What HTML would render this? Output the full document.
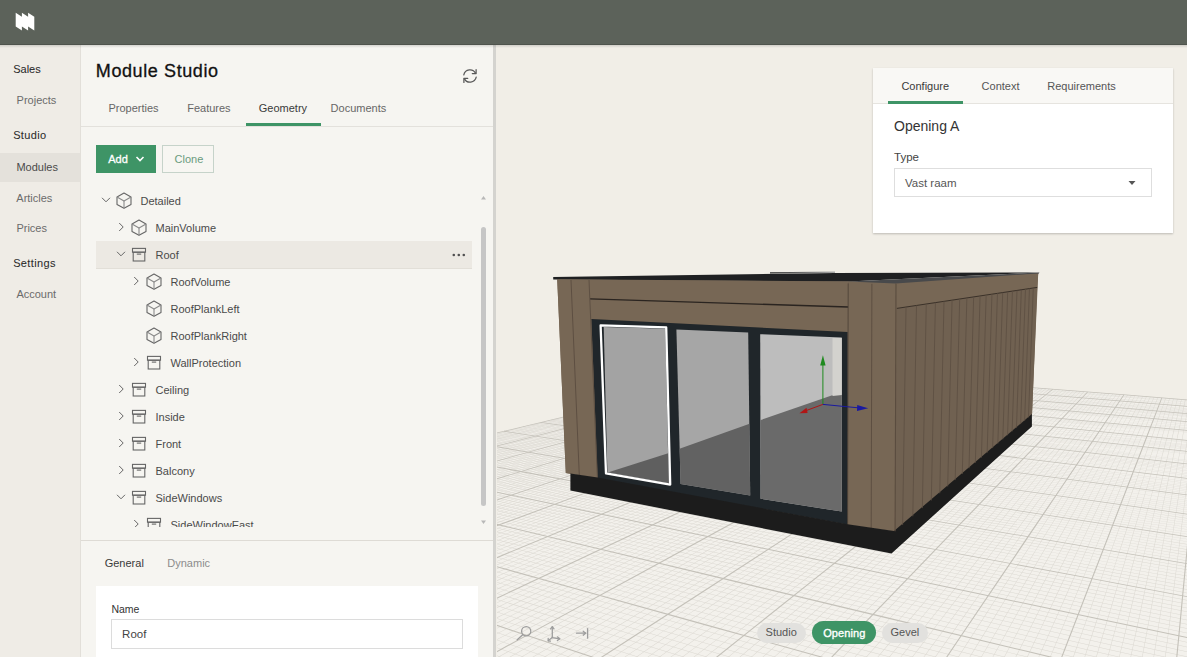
<!DOCTYPE html>
<html><head><meta charset="utf-8"><style>
html,body{margin:0;padding:0;width:1187px;height:657px;overflow:hidden;background:#f1eee7;font-family:"Liberation Sans", sans-serif}
.r{position:absolute}
.t{position:absolute;white-space:nowrap;line-height:20px;font-family:"Liberation Sans", sans-serif}
</style></head><body>
<div class="r" style="left:0px;top:0px;width:1187px;height:44px;background:#5c625a"></div><div class="r" style="left:0px;top:44px;width:1187px;height:1px;background:#4f544d"></div><svg class="r" style="left:0;top:0" width="50" height="44"><polygon fill="#fff" points="15.7,12.8 21.9,16.8 21.9,12.8 28.1,16.8 28.1,12.8 34.3,16.8 34.3,30.4 28.1,26.4 28.1,30.4 21.9,26.4 21.9,30.4 15.7,26.4"/></svg><div class="r" style="left:0px;top:45px;width:80px;height:612px;background:#efece6"></div><div class="r" style="left:80px;top:45px;width:1px;height:612px;background:#e2dfd9"></div><div class="r" style="left:0px;top:153px;width:80px;height:29px;background:#e4e1db"></div><div class="t" style="left:13.2px;top:58.99px;font-size:11px;color:#2a2a2a;font-weight:normal;letter-spacing:0px;-webkit-text-stroke:0.05px #2a2a2a">Sales</div><div class="t" style="left:16.6px;top:90.49px;font-size:11px;color:#6b6b6b;font-weight:normal;">Projects</div><div class="t" style="left:13.2px;top:125.39px;font-size:11px;color:#2a2a2a;font-weight:normal;letter-spacing:0.35px;-webkit-text-stroke:0.05px #2a2a2a">Studio</div><div class="t" style="left:16.4px;top:157.19px;font-size:11px;color:#4a4a4a;font-weight:normal;">Modules</div><div class="t" style="left:16.3px;top:187.79px;font-size:11px;color:#6b6b6b;font-weight:normal;">Articles</div><div class="t" style="left:16.4px;top:217.79px;font-size:11px;color:#6b6b6b;font-weight:normal;">Prices</div><div class="t" style="left:13.2px;top:252.79px;font-size:11px;color:#2a2a2a;font-weight:normal;letter-spacing:0.35px;-webkit-text-stroke:0.05px #2a2a2a">Settings</div><div class="t" style="left:16.4px;top:284.19px;font-size:11px;color:#6b6b6b;font-weight:normal;">Account</div><div class="r" style="left:81px;top:45px;width:412px;height:612px;background:#f6f5f1"></div><div class="r" style="left:493px;top:45px;width:3px;height:612px;background:#d4d3cf"></div><div class="t" style="left:95.8px;top:61.06px;font-size:18px;color:#111;font-weight:normal;letter-spacing:0.6px;-webkit-text-stroke:0.3px #111">Module Studio</div><svg class="r" style="left:459px;top:65px" width="22" height="22" viewBox="-11 -11 22 22"><g fill="none" stroke="#595959" stroke-width="1.25" stroke-linecap="round" stroke-linejoin="round"><path d="M-6.2,-1.2 A6.3,6.3 0 0 1 5.6,-2.6"/><polyline points="6.1,-6.4 6.1,-2.4 2.3,-2.4"/><path d="M6.2,1.2 A6.3,6.3 0 0 1 -5.6,2.6"/><polyline points="-6.1,6.4 -6.1,2.4 -2.3,2.4"/></g></svg><div class="t" style="left:108.4px;top:98.19px;font-size:11px;color:#666;font-weight:normal;">Properties</div><div class="t" style="left:187.2px;top:98.19px;font-size:11px;color:#666;font-weight:normal;">Features</div><div class="t" style="left:258.8px;top:98.19px;font-size:11px;color:#3a3a3a;font-weight:normal;">Geometry</div><div class="t" style="left:330.6px;top:98.19px;font-size:11px;color:#666;font-weight:normal;">Documents</div><div class="r" style="left:81px;top:126px;width:412px;height:1px;background:#e3e1dc"></div><div class="r" style="left:246px;top:123px;width:75px;height:3px;background:#3e9466"></div><div class="r" style="left:96px;top:145px;width:60px;height:28px;background:#3e9466"></div><div class="t" style="left:108.2px;top:149.09px;font-size:11px;color:#fff;font-weight:normal;-webkit-text-stroke:0.3px #fff">Add</div><svg class="r" style="left:134px;top:154px" width="12" height="10"><polyline points="2.5,3 6,6.5 9.5,3" fill="none" stroke="#fff" stroke-width="1.6"/></svg><div class="r" style="left:162px;top:145px;width:52px;height:28px;border:1px solid #c6d3ca;box-sizing:border-box;background:#f7f6f2"></div><div class="t" style="left:174.6px;top:149.09px;font-size:11px;color:#6a9b7e;font-weight:normal;">Clone</div><div class="r" style="left:96px;top:241px;width:376px;height:28px;background:#ece9e3;border-bottom:1px solid #e2dfd8;box-sizing:border-box"></div><svg class="r" style="left:0;top:0;overflow:hidden" width="497" height="540" viewBox="0 0 497 540"><defs><clipPath id="tc"><rect x="81" y="186" width="400" height="341"/></clipPath></defs><g clip-path="url(#tc)"><polyline points="102,197.8 106,201.8 110,197.8" fill="none" stroke="#666" stroke-width="1"/><g transform="translate(124,200.7)" fill="none" stroke="#666" stroke-width="1.1" stroke-linejoin="round"><polygon points="0,-7.6 7,-3.8 7,3.8 0,7.6 -7,3.8 -7,-3.8"/><polyline points="-7,-3.8 0,0.2 7,-3.8" stroke="#8a8a8a"/><line x1="0" y1="0.2" x2="0" y2="7.6" stroke="#8a8a8a"/></g><polyline points="119.2,223 123.2,227 119.2,231" fill="none" stroke="#666" stroke-width="1"/><g transform="translate(139,227.7)" fill="none" stroke="#666" stroke-width="1.1" stroke-linejoin="round"><polygon points="0,-7.6 7,-3.8 7,3.8 0,7.6 -7,3.8 -7,-3.8"/><polyline points="-7,-3.8 0,0.2 7,-3.8" stroke="#8a8a8a"/><line x1="0" y1="0.2" x2="0" y2="7.6" stroke="#8a8a8a"/></g><polyline points="117,251.8 121,255.8 125,251.8" fill="none" stroke="#666" stroke-width="1"/><g transform="translate(139,254.7)" fill="none" stroke="#666" stroke-width="1.1"><rect x="-6.5" y="-6.3" width="13" height="3.8"/><rect x="-5.8" y="-2.5" width="11.6" height="8.8"/><line x1="-2.2" y1="-0.6" x2="2.2" y2="-0.6"/></g><polyline points="134.2,277 138.2,281 134.2,285" fill="none" stroke="#666" stroke-width="1"/><g transform="translate(154,281.7)" fill="none" stroke="#666" stroke-width="1.1" stroke-linejoin="round"><polygon points="0,-7.6 7,-3.8 7,3.8 0,7.6 -7,3.8 -7,-3.8"/><polyline points="-7,-3.8 0,0.2 7,-3.8" stroke="#8a8a8a"/><line x1="0" y1="0.2" x2="0" y2="7.6" stroke="#8a8a8a"/></g><g transform="translate(154,308.7)" fill="none" stroke="#666" stroke-width="1.1" stroke-linejoin="round"><polygon points="0,-7.6 7,-3.8 7,3.8 0,7.6 -7,3.8 -7,-3.8"/><polyline points="-7,-3.8 0,0.2 7,-3.8" stroke="#8a8a8a"/><line x1="0" y1="0.2" x2="0" y2="7.6" stroke="#8a8a8a"/></g><g transform="translate(154,335.7)" fill="none" stroke="#666" stroke-width="1.1" stroke-linejoin="round"><polygon points="0,-7.6 7,-3.8 7,3.8 0,7.6 -7,3.8 -7,-3.8"/><polyline points="-7,-3.8 0,0.2 7,-3.8" stroke="#8a8a8a"/><line x1="0" y1="0.2" x2="0" y2="7.6" stroke="#8a8a8a"/></g><polyline points="134.2,358 138.2,362 134.2,366" fill="none" stroke="#666" stroke-width="1"/><g transform="translate(154,362.7)" fill="none" stroke="#666" stroke-width="1.1"><rect x="-6.5" y="-6.3" width="13" height="3.8"/><rect x="-5.8" y="-2.5" width="11.6" height="8.8"/><line x1="-2.2" y1="-0.6" x2="2.2" y2="-0.6"/></g><polyline points="119.2,385 123.2,389 119.2,393" fill="none" stroke="#666" stroke-width="1"/><g transform="translate(139,389.7)" fill="none" stroke="#666" stroke-width="1.1"><rect x="-6.5" y="-6.3" width="13" height="3.8"/><rect x="-5.8" y="-2.5" width="11.6" height="8.8"/><line x1="-2.2" y1="-0.6" x2="2.2" y2="-0.6"/></g><polyline points="119.2,412 123.2,416 119.2,420" fill="none" stroke="#666" stroke-width="1"/><g transform="translate(139,416.7)" fill="none" stroke="#666" stroke-width="1.1"><rect x="-6.5" y="-6.3" width="13" height="3.8"/><rect x="-5.8" y="-2.5" width="11.6" height="8.8"/><line x1="-2.2" y1="-0.6" x2="2.2" y2="-0.6"/></g><polyline points="119.2,439 123.2,443 119.2,447" fill="none" stroke="#666" stroke-width="1"/><g transform="translate(139,443.7)" fill="none" stroke="#666" stroke-width="1.1"><rect x="-6.5" y="-6.3" width="13" height="3.8"/><rect x="-5.8" y="-2.5" width="11.6" height="8.8"/><line x1="-2.2" y1="-0.6" x2="2.2" y2="-0.6"/></g><polyline points="119.2,466 123.2,470 119.2,474" fill="none" stroke="#666" stroke-width="1"/><g transform="translate(139,470.7)" fill="none" stroke="#666" stroke-width="1.1"><rect x="-6.5" y="-6.3" width="13" height="3.8"/><rect x="-5.8" y="-2.5" width="11.6" height="8.8"/><line x1="-2.2" y1="-0.6" x2="2.2" y2="-0.6"/></g><polyline points="117,494.8 121,498.8 125,494.8" fill="none" stroke="#666" stroke-width="1"/><g transform="translate(139,497.7)" fill="none" stroke="#666" stroke-width="1.1"><rect x="-6.5" y="-6.3" width="13" height="3.8"/><rect x="-5.8" y="-2.5" width="11.6" height="8.8"/><line x1="-2.2" y1="-0.6" x2="2.2" y2="-0.6"/></g><polyline points="134.2,520 138.2,524 134.2,528" fill="none" stroke="#666" stroke-width="1"/><g transform="translate(154,524.7)" fill="none" stroke="#666" stroke-width="1.1"><rect x="-6.5" y="-6.3" width="13" height="3.8"/><rect x="-5.8" y="-2.5" width="11.6" height="8.8"/><line x1="-2.2" y1="-0.6" x2="2.2" y2="-0.6"/></g></g><circle cx="453.8" cy="255" r="1.3" fill="#505050"/><circle cx="458.8" cy="255" r="1.3" fill="#505050"/><circle cx="463.8" cy="255" r="1.3" fill="#505050"/><polygon points="481,199.5 486,199.5 483.5,196" fill="#b8b8b8"/><polygon points="481,520.5 486,520.5 483.5,524" fill="#b8b8b8"/><rect x="481" y="227" width="5" height="279" rx="2.5" fill="#c6c6c6"/></svg><div class="r" style="left:81px;top:186px;width:400px;height:341px;overflow:hidden"><div class="t" style="left:59.5px;top:4.89px;font-size:11px;color:#4a4a4a">Detailed</div><div class="t" style="left:74.5px;top:31.89px;font-size:11px;color:#4a4a4a">MainVolume</div><div class="t" style="left:74.5px;top:58.89px;font-size:11px;color:#4a4a4a">Roof</div><div class="t" style="left:89.5px;top:85.89px;font-size:11px;color:#4a4a4a">RoofVolume</div><div class="t" style="left:89.5px;top:112.89px;font-size:11px;color:#4a4a4a">RoofPlankLeft</div><div class="t" style="left:89.5px;top:139.89px;font-size:11px;color:#4a4a4a">RoofPlankRight</div><div class="t" style="left:89.5px;top:166.89px;font-size:11px;color:#4a4a4a">WallProtection</div><div class="t" style="left:74.5px;top:193.89px;font-size:11px;color:#4a4a4a">Ceiling</div><div class="t" style="left:74.5px;top:220.89px;font-size:11px;color:#4a4a4a">Inside</div><div class="t" style="left:74.5px;top:247.89px;font-size:11px;color:#4a4a4a">Front</div><div class="t" style="left:74.5px;top:274.89px;font-size:11px;color:#4a4a4a">Balcony</div><div class="t" style="left:74.5px;top:301.89px;font-size:11px;color:#4a4a4a">SideWindows</div><div class="t" style="left:89.5px;top:328.89px;font-size:11px;color:#4a4a4a">SideWindowEast</div></div><div class="r" style="left:81px;top:540px;width:412px;height:1px;background:#dedbd5"></div><div class="t" style="left:104.7px;top:553.49px;font-size:11px;color:#3a3a3a;font-weight:normal;">General</div><div class="t" style="left:167.3px;top:553.49px;font-size:11px;color:#8c8c8c;font-weight:normal;">Dynamic</div><div class="r" style="left:96px;top:586px;width:382px;height:71px;background:#fff"></div><div class="t" style="left:111.4px;top:598.66px;font-size:10.5px;color:#333;font-weight:normal;">Name</div><div class="r" style="left:111px;top:619px;width:352px;height:30px;border:1px solid #dcdcdc;box-sizing:border-box;background:#fff"></div><div class="t" style="left:122.1px;top:623.92px;font-size:11.5px;color:#444;font-weight:normal;">Roof</div><svg class="r" style="left:497px;top:45px" width="690" height="612" viewBox="497 45 690 612"><polygon points="-1003.5,794.5 -973.8,787.3 -944.8,780.4 -916.6,773.6 -889.1,766.9 -862.3,760.5 -836.2,754.2 -810.7,748.0 -785.9,742.1 -761.6,736.2 -738.0,730.5 -714.9,725.0 -692.3,719.5 -670.3,714.2 -648.8,709.0 -627.7,704.0 -607.1,699.0 -587.0,694.1 -567.3,689.4 -548.1,684.8 -529.2,680.2 -510.8,675.8 -492.7,671.4 -475.0,667.2 -457.7,663.0 -440.7,658.9 -424.1,654.9 -407.8,651.0 -391.8,647.1 -376.1,643.3 -360.8,639.6 -345.7,636.0 -330.9,632.4 -316.4,628.9 -302.1,625.5 -288.2,622.2 -274.4,618.8 -261.0,615.6 -247.7,612.4 -234.7,609.3 -222.0,606.2 -209.4,603.2 -197.1,600.2 -185.0,597.3 -173.1,594.4 -161.4,591.6 -149.9,588.8 -138.5,586.1 -127.4,583.4 -116.4,580.8 -105.7,578.2 -95.1,575.6 -84.6,573.1 -74.4,570.6 -64.2,568.2 -54.3,565.8 -44.5,563.4 -34.8,561.1 -25.3,558.8 -16.0,556.6 -6.8,554.4 2.3,552.2 11.3,550.0 20.1,547.9 28.8,545.8 37.3,543.7 45.8,541.7 54.1,539.7 62.3,537.7 70.4,535.8 78.3,533.8 86.2,532.0 94.0,530.1 101.6,528.2 109.2,526.4 116.6,524.6 124.0,522.9 131.2,521.1 138.4,519.4 145.4,517.7 152.4,516.0 159.3,514.4 166.0,512.7 172.7,511.1 179.4,509.5 185.9,507.9 192.3,506.4 198.7,504.9 205.0,503.3 211.2,501.8 217.4,500.4 223.4,498.9 229.4,497.5 235.3,496.0 241.2,494.6 246.9,493.2 252.7,491.9 258.3,490.5 263.9,489.1 269.4,487.8 274.8,486.5 280.2,485.2 285.6,483.9 290.8,482.7 296.0,481.4 301.2,480.2 306.3,478.9 311.3,477.7 316.3,476.5 321.2,475.3 326.1,474.2 330.9,473.0 335.6,471.9 340.4,470.7 345.0,469.6 349.6,468.5 354.2,467.4 358.7,466.3 363.2,465.2 367.6,464.2 372.0,463.1 376.3,462.1 380.6,461.0 384.9,460.0 389.1,459.0 393.2,458.0 397.3,457.0 401.4,456.0 405.5,455.0 409.5,454.1 413.4,453.1 417.3,452.2 421.2,451.2 425.1,450.3 428.9,449.4 432.6,448.5 436.4,447.6 440.1,446.7 443.7,445.8 447.4,444.9 450.9,444.1 454.5,443.2 458.0,442.4 461.5,441.5 465.0,440.7 468.4,439.9 471.8,439.0 475.2,438.2 478.5,437.4 481.8,436.6 485.1,435.8 488.4,435.1 491.6,434.3 494.8,433.5 498.0,432.8 501.1,432.0 504.2,431.2 507.3,430.5 510.3,429.8 513.4,429.0 516.4,428.3 519.4,427.6 522.3,426.9 525.2,426.2 528.1,425.5 531.0,424.8 533.9,424.1 536.7,423.4 539.5,422.7 542.3,422.1 545.1,421.4 547.8,420.7 550.5,420.1 553.2,419.4 555.9,418.8 558.5,418.2 561.2,417.5 563.8,416.9 566.4,416.3 568.9,415.7 571.5,415.0 574.0,414.4 576.5,413.8 579.0,413.2 581.5,412.6 583.9,412.0 586.4,411.5 588.8,410.9 591.2,410.3 593.5,409.7 595.9,409.2 598.2,408.6 600.6,408.0 602.9,407.5 605.2,406.9 607.4,406.4 609.7,405.8 611.9,405.3 614.1,404.8 616.3,404.2 618.5,403.7 620.7,403.2 622.9,402.7 625.0,402.1 627.1,401.6 629.2,401.1 631.3,400.6 633.4,400.1 635.5,399.6 637.5,399.1 639.6,398.6 641.6,398.1 643.6,397.7 645.6,397.2 647.6,396.7 649.5,396.2 651.5,395.8 653.4,395.3 655.4,394.8 657.3,394.4 659.2,393.9 661.1,393.5 662.9,393.0 664.8,392.6 666.6,392.1 668.5,391.7 670.3,391.2 672.1,390.8 673.9,390.4 675.7,389.9 677.5,389.5 679.3,389.1 681.0,388.7 682.7,388.2 684.5,387.8 686.2,387.4 687.9,387.0 689.6,386.6 691.3,386.2 693.0,385.8 694.6,385.4 696.3,385.0 697.9,384.6 699.6,384.2 701.2,383.8 702.8,383.4 704.4,383.0 706.0,382.6 707.6,382.3 709.2,381.9 710.7,381.5 712.3,381.1 713.8,380.7 715.3,380.4 716.9,380.0 718.4,379.6 719.9,379.3 721.4,378.9 722.9,378.6 724.4,378.2 725.8,377.9 727.3,377.5 728.7,377.2 730.2,376.8 731.6,376.5 733.1,376.1 734.5,375.8 735.9,375.4 737.3,375.1 738.7,374.8 740.1,374.4 741.4,374.1 742.8,373.8 744.2,373.4 745.5,373.1 746.9,372.8 748.2,372.5 749.6,372.1 750.9,371.8 752.2,371.5 753.5,371.2 754.8,370.9 756.1,370.6 757.4,370.3 758.7,369.9 759.9,369.6 761.2,369.3 762.5,369.0 763.7,368.7 765.0,368.4 766.2,368.1 767.4,367.8 768.7,367.5 769.9,367.2 769.9,367.2 771.8,367.4 773.6,367.5 775.5,367.7 777.4,367.8 779.4,368.0 781.3,368.1 783.2,368.3 785.1,368.4 787.0,368.6 789.0,368.7 790.9,368.9 792.9,369.0 794.8,369.2 796.8,369.3 798.7,369.5 800.7,369.6 802.7,369.8 804.6,370.0 806.6,370.1 808.6,370.3 810.6,370.4 812.6,370.6 814.6,370.7 816.6,370.9 818.6,371.0 820.7,371.2 822.7,371.4 824.7,371.5 826.8,371.7 828.8,371.8 830.8,372.0 832.9,372.2 835.0,372.3 837.0,372.5 839.1,372.6 841.2,372.8 843.3,373.0 845.4,373.1 847.5,373.3 849.6,373.5 851.7,373.6 853.8,373.8 855.9,374.0 858.1,374.1 860.2,374.3 862.3,374.4 864.5,374.6 866.6,374.8 868.8,375.0 871.0,375.1 873.1,375.3 875.3,375.5 877.5,375.6 879.7,375.8 881.9,376.0 884.1,376.1 886.3,376.3 888.5,376.5 890.8,376.7 893.0,376.8 895.2,377.0 897.5,377.2 899.7,377.4 902.0,377.5 904.3,377.7 906.5,377.9 908.8,378.1 911.1,378.3 913.4,378.4 915.7,378.6 918.0,378.8 920.3,379.0 922.6,379.1 925.0,379.3 927.3,379.5 929.6,379.7 932.0,379.9 934.3,380.1 936.7,380.2 939.1,380.4 941.5,380.6 943.9,380.8 946.2,381.0 948.6,381.2 951.1,381.4 953.5,381.6 955.9,381.7 958.3,381.9 960.8,382.1 963.2,382.3 965.7,382.5 968.1,382.7 970.6,382.9 973.1,383.1 975.6,383.3 978.0,383.5 980.5,383.7 983.1,383.9 985.6,384.1 988.1,384.3 990.6,384.4 993.2,384.6 995.7,384.8 998.3,385.0 1000.8,385.2 1003.4,385.4 1006.0,385.6 1008.6,385.8 1011.2,386.1 1013.8,386.3 1016.4,386.5 1019.0,386.7 1021.7,386.9 1024.3,387.1 1026.9,387.3 1029.6,387.5 1032.3,387.7 1034.9,387.9 1037.6,388.1 1040.3,388.3 1043.0,388.5 1045.7,388.7 1048.5,389.0 1051.2,389.2 1053.9,389.4 1056.7,389.6 1059.4,389.8 1062.2,390.0 1065.0,390.2 1067.7,390.5 1070.5,390.7 1073.3,390.9 1076.1,391.1 1079.0,391.3 1081.8,391.6 1084.6,391.8 1087.5,392.0 1090.3,392.2 1093.2,392.4 1096.1,392.7 1099.0,392.9 1101.9,393.1 1104.8,393.3 1107.7,393.6 1110.6,393.8 1113.6,394.0 1116.5,394.3 1119.5,394.5 1122.4,394.7 1125.4,395.0 1128.4,395.2 1131.4,395.4 1134.4,395.7 1137.4,395.9 1140.4,396.1 1143.5,396.4 1146.5,396.6 1149.6,396.8 1152.7,397.1 1155.8,397.3 1158.9,397.6 1162.0,397.8 1165.1,398.0 1168.2,398.3 1171.3,398.5 1174.5,398.8 1177.6,399.0 1180.8,399.3 1184.0,399.5 1187.2,399.8 1190.4,400.0 1193.6,400.3 1196.8,400.5 1200.1,400.8 1203.3,401.0 1206.6,401.3 1209.9,401.5 1213.2,401.8 1216.5,402.1 1219.8,402.3 1223.1,402.6 1226.4,402.8 1229.8,403.1 1233.1,403.4 1236.5,403.6 1239.9,403.9 1243.3,404.1 1246.7,404.4 1250.1,404.7 1253.5,404.9 1257.0,405.2 1260.5,405.5 1263.9,405.8 1267.4,406.0 1270.9,406.3 1274.4,406.6 1277.9,406.8 1281.5,407.1 1285.0,407.4 1288.6,407.7 1292.2,408.0 1295.8,408.2 1299.4,408.5 1303.0,408.8 1306.6,409.1 1310.3,409.4 1313.9,409.6 1317.6,409.9 1321.3,410.2 1325.0,410.5 1328.7,410.8 1332.4,411.1 1336.2,411.4 1340.0,411.7 1343.7,412.0 1347.5,412.3 1351.3,412.6 1355.1,412.9 1359.0,413.2 1362.8,413.5 1366.7,413.8 1370.6,414.1 1374.5,414.4 1378.4,414.7 1382.3,415.0 1386.2,415.3 1390.2,415.6 1394.2,415.9 1398.2,416.2 1402.2,416.5 1406.2,416.8 1410.2,417.2 1414.3,417.5 1418.3,417.8 1422.4,418.1 1426.5,418.4 1430.7,418.7 1434.8,419.1 1438.9,419.4 1443.1,419.7 1447.3,420.0 1451.5,420.4 1455.7,420.7 1460.0,421.0 1464.2,421.4 1468.5,421.7 1472.8,422.0 1477.1,422.4 1481.4,422.7 1485.8,423.0 1490.1,423.4 1494.5,423.7 1498.9,424.1 1503.3,424.4 1507.8,424.8 1512.2,425.1 1516.7,425.5 1521.2,425.8 1525.7,426.2 1530.2,426.5 1534.8,426.9 1539.3,427.2 1543.9,427.6 1548.5,427.9 1553.2,428.3 1557.8,428.7 1562.5,429.0 1567.2,429.4 1571.9,429.8 1576.6,430.1 1581.4,430.5 1586.1,430.9 1590.9,431.2 1595.7,431.6 1600.6,432.0 1605.4,432.4 1610.3,432.7 1615.2,433.1 1620.1,433.5 1625.1,433.9 1630.0,434.3 1635.0,434.7 1640.0,435.1 1645.0,435.5 1650.1,435.9 1655.2,436.2 1660.3,436.6 1665.4,437.0 1670.5,437.4 1675.7,437.8 1680.9,438.3 1686.1,438.7 1691.4,439.1 1696.6,439.5 1700.0,439.5 1700.0,900.0 300.0,900.0 -1003.5,900.0" fill="#f3f1ec" /><g fill="#dcd9d2"><polygon points="-299.3,627.56 -146.2,590.44 6.9,553.31 160.0,516.18 313.1,479.04 466.1,441.89 619.2,404.74 772.3,367.57 772.2,367.28 619.1,404.39 466.0,441.51 313.0,478.64 159.9,515.78 6.8,552.93 -146.3,590.08 -299.3,627.22"/><polygon points="-299.6,630.25 -146.1,592.76 7.3,555.28 160.8,517.79 314.3,480.30 467.7,442.79 621.2,405.28 774.6,367.75 774.5,367.47 621.1,404.93 467.6,442.41 314.2,479.89 160.7,517.39 7.2,554.89 -146.2,592.40 -299.7,629.90"/><polygon points="-299.9,632.97 -146.1,595.12 7.8,557.27 161.6,519.42 315.5,481.57 469.3,443.70 623.1,405.82 777.0,367.94 776.9,367.65 623.1,405.48 469.2,443.31 315.4,481.16 161.5,519.02 7.7,556.88 -146.2,594.75 -300.0,632.62"/><polygon points="-299.2,635.46 -145.1,597.28 9.0,559.11 163.1,520.93 317.1,482.74 471.2,444.55 625.3,406.34 779.4,368.12 779.3,367.83 625.2,405.99 471.1,444.16 317.0,482.33 163.0,520.52 8.9,558.71 -145.2,596.91 -299.2,635.11"/><polygon points="-299.5,638.26 -145.0,599.71 9.4,561.16 163.9,522.61 318.4,484.05 472.8,445.48 627.3,406.90 781.7,368.31 781.7,368.02 627.2,406.55 472.7,445.09 318.3,483.64 163.8,522.20 9.3,560.76 -145.1,599.33 -299.6,637.90"/><polygon points="-299.8,641.10 -145.0,602.17 9.9,563.24 164.7,524.31 319.6,485.37 474.4,446.42 629.3,407.47 784.1,368.50 784.1,368.21 629.2,407.11 474.3,446.03 319.5,484.96 164.6,523.90 9.8,562.84 -145.1,601.79 -299.9,640.74"/><polygon points="-299.1,643.70 -144.0,604.43 11.1,565.16 166.2,525.88 321.3,486.60 476.4,447.30 631.5,408.00 786.5,368.68 786.5,368.39 631.4,407.64 476.3,446.91 321.2,486.18 166.1,525.46 11.0,564.75 -144.1,604.05 -299.2,643.34"/><polygon points="-299.4,646.62 -143.9,606.96 11.6,567.30 167.0,527.63 322.5,487.96 478.0,448.27 633.5,408.58 788.9,368.87 788.9,368.58 633.4,408.22 477.9,447.87 322.4,487.54 166.9,527.21 11.5,566.89 -144.0,606.57 -299.5,646.26"/><polygon points="-299.8,649.59 -143.9,609.53 12.0,569.47 167.9,529.41 323.8,489.34 479.6,449.26 635.5,409.16 791.4,369.06 791.3,368.77 635.4,408.81 479.5,448.85 323.6,488.91 167.8,528.98 11.9,569.06 -144.0,609.14 -299.8,649.22"/><polygon points="-299.3,655.37 -142.8,614.54 13.7,573.71 170.2,532.87 326.7,492.03 483.2,451.18 639.7,410.31 796.2,369.44 796.1,369.15 639.6,409.95 483.1,450.77 326.6,491.60 170.1,532.44 13.6,573.29 -142.9,614.14 -299.4,654.99"/><polygon points="-299.7,658.47 -142.8,617.22 14.1,575.98 171.1,534.73 328.0,493.47 484.9,452.20 641.8,410.92 798.7,369.63 798.6,369.33 641.7,410.56 484.8,451.79 327.8,493.04 170.9,534.29 14.0,575.56 -142.9,616.82 -299.8,658.09"/><polygon points="-298.9,661.32 -141.7,619.69 15.4,578.07 172.6,536.44 329.7,494.80 486.8,453.15 644.0,411.49 801.1,369.82 801.0,369.53 643.9,411.13 486.7,452.74 329.6,494.36 172.4,536.00 15.3,577.64 -141.8,619.29 -299.0,660.93"/><polygon points="-299.2,664.52 -141.7,622.46 15.9,580.41 173.4,538.35 331.0,496.28 488.5,454.20 646.0,412.11 803.6,370.01 803.5,369.72 645.9,411.75 488.4,453.79 330.8,495.84 173.3,537.90 15.8,579.98 -141.8,622.05 -299.3,664.12"/><polygon points="-299.6,667.77 -141.6,625.27 16.3,582.78 174.3,540.29 332.2,497.78 490.2,455.27 648.1,412.74 806.0,370.21 806.0,369.91 648.0,412.37 490.0,454.85 332.1,497.34 174.1,539.84 16.2,582.35 -141.7,624.86 -299.7,667.37"/><polygon points="-298.8,670.75 -140.6,627.86 17.6,584.97 175.8,542.07 334.0,499.17 492.2,456.26 650.3,413.34 808.5,370.40 808.4,370.10 650.2,412.96 492.0,455.84 333.9,498.73 175.7,541.62 17.5,584.53 -140.7,627.44 -298.9,670.35"/><polygon points="-299.1,674.10 -140.5,630.76 18.1,587.42 176.7,544.07 335.2,500.72 493.8,457.36 652.4,413.98 811.0,370.60 810.9,370.29 652.3,413.61 493.7,456.93 335.1,500.27 176.5,543.62 17.9,586.98 -140.6,630.33 -299.2,673.69"/><polygon points="-299.5,677.51 -140.5,633.71 18.5,589.91 177.5,546.10 336.5,502.29 495.5,458.47 654.5,414.64 813.5,370.79 813.4,370.49 654.4,414.26 495.4,458.04 336.4,501.84 177.4,545.65 18.4,589.46 -140.6,633.28 -299.6,677.09"/><polygon points="-299.9,680.97 -140.4,636.70 19.0,592.44 178.4,548.17 337.8,503.89 497.2,459.60 656.6,415.30 816.0,370.99 815.9,370.68 656.5,414.92 497.1,459.17 337.7,503.43 178.2,547.70 18.8,591.99 -140.6,636.27 -300.0,680.55"/><polygon points="-299.4,687.72 -139.3,642.55 20.7,597.37 180.8,552.19 340.9,507.01 500.9,461.81 661.0,416.60 821.0,371.38 820.9,371.07 660.9,416.22 500.8,461.38 340.7,506.54 180.7,551.72 20.6,596.91 -139.5,642.10 -299.5,687.29"/><polygon points="-299.8,691.36 -139.3,645.69 21.2,600.02 181.7,554.36 342.1,508.68 502.6,462.99 663.1,417.29 823.6,371.58 823.5,371.27 663.0,416.91 502.5,462.55 342.0,508.21 181.5,553.88 21.1,599.56 -139.4,645.24 -299.9,690.92"/><polygon points="-298.9,694.70 -138.2,648.58 22.5,602.47 183.2,556.35 344.0,510.22 504.7,464.09 665.4,417.94 826.1,371.77 826.0,371.47 665.3,417.55 504.5,463.65 343.8,509.75 183.1,555.87 22.4,602.00 -138.3,648.13 -299.0,694.26"/><polygon points="-299.3,698.45 -138.2,651.83 23.0,605.20 184.1,558.58 345.3,511.95 506.4,465.30 667.5,418.64 828.6,371.97 828.5,371.67 667.4,418.26 506.3,464.86 345.1,511.47 184.0,558.10 22.8,604.73 -138.3,651.37 -299.4,698.00"/><polygon points="-299.7,702.27 -138.1,655.13 23.4,607.99 185.0,560.85 346.5,513.70 508.1,466.54 669.6,419.36 831.2,372.17 831.1,371.86 669.5,418.97 508.0,466.09 346.4,513.22 184.9,560.37 23.3,607.51 -138.3,654.67 -299.8,701.82"/><polygon points="-298.8,705.78 -137.0,658.17 24.8,610.55 186.6,562.94 348.4,515.32 510.2,467.68 672.0,420.03 833.8,372.37 833.7,372.06 671.9,419.64 510.1,467.23 348.3,514.84 186.5,562.46 24.7,610.07 -137.1,657.70 -298.9,705.32"/><polygon points="-299.2,709.73 -137.0,661.58 25.3,613.43 187.5,565.28 349.7,517.12 511.9,468.95 674.1,420.77 836.3,372.57 836.2,372.26 674.0,420.38 511.8,468.50 349.6,516.64 187.3,564.80 25.1,612.95 -137.1,661.11 -299.3,709.27"/><polygon points="-299.6,713.75 -136.9,665.06 25.7,616.36 188.4,567.66 351.0,518.96 513.6,470.25 676.3,421.52 838.9,372.78 838.8,372.47 676.2,421.12 513.5,469.79 350.9,518.48 188.2,567.18 25.6,615.88 -137.1,664.58 -299.7,713.28"/><polygon points="-298.7,717.45 -135.8,668.25 27.1,619.05 190.0,569.85 352.9,520.66 515.8,471.45 678.6,422.22 841.5,372.98 841.4,372.67 678.5,421.82 515.6,470.99 352.7,520.18 189.8,569.38 27.0,618.57 -135.9,667.77 -298.8,716.97"/><polygon points="-280.9,720.14 -119.8,670.61 41.3,621.09 202.4,571.56 363.5,522.04 524.6,472.51 685.6,422.95 846.7,373.39 846.6,373.07 685.5,422.55 524.4,472.05 363.3,521.56 202.2,571.09 41.1,620.61 -120.0,670.13 -281.1,719.66"/><polygon points="-266.8,719.88 -107.3,670.42 52.1,620.96 211.6,571.50 371.0,522.05 530.5,472.58 689.9,423.09 849.3,373.59 849.2,373.28 689.8,422.69 530.3,472.12 370.9,521.57 211.4,571.03 52.0,620.49 -107.5,669.94 -266.9,719.40"/><polygon points="-253.9,720.02 -95.9,670.57 62.0,621.13 220.0,571.68 378.0,522.23 536.0,472.77 694.0,423.29 852.0,373.80 851.9,373.48 693.9,422.89 535.9,472.30 377.9,521.75 219.9,571.20 61.9,620.65 -96.1,670.10 -254.1,719.55"/><polygon points="-241.1,720.17 -84.6,670.73 72.0,621.29 228.5,571.85 385.0,522.41 541.6,472.96 698.1,423.49 854.6,374.00 854.5,373.69 698.0,423.08 541.4,472.49 384.9,521.93 228.4,571.37 71.8,620.81 -84.7,670.25 -241.2,719.69"/><polygon points="-227.0,719.91 -72.1,670.54 82.8,621.16 237.7,571.79 392.6,522.41 547.5,473.04 702.4,423.63 857.3,374.21 857.2,373.89 702.3,423.22 547.4,472.56 392.5,521.94 237.6,571.31 82.7,620.69 -72.2,670.06 -227.1,719.44"/><polygon points="-214.1,720.06 -60.7,670.69 92.8,621.33 246.2,571.96 399.6,522.59 553.1,473.23 706.5,423.83 859.9,374.42 859.8,374.10 706.4,423.42 552.9,472.75 399.5,522.12 246.1,571.48 92.6,620.85 -60.8,670.22 -214.2,719.58"/><polygon points="-201.2,720.20 -49.2,670.85 102.7,621.49 254.7,572.13 406.7,522.77 558.7,473.42 710.6,424.03 862.6,374.63 862.5,374.31 710.5,423.62 558.5,472.94 406.5,522.30 254.6,571.66 102.6,621.01 -49.4,670.37 -201.4,719.73"/><polygon points="-187.1,719.94 -36.8,670.65 113.6,621.36 263.9,572.07 414.3,522.78 564.6,473.49 714.9,424.17 865.3,374.83 865.2,374.51 714.8,423.76 564.5,473.02 414.1,522.31 263.8,571.60 113.4,620.89 -36.9,670.18 -187.3,719.47"/><polygon points="-174.2,720.09 -25.4,670.81 123.5,621.53 272.4,572.25 421.3,522.96 570.2,473.68 719.1,424.37 868.0,375.04 867.9,374.72 718.9,423.96 570.0,473.21 421.2,522.49 272.3,571.77 123.4,621.05 -25.5,670.33 -174.4,719.62"/><polygon points="-147.3,719.98 -1.5,670.77 144.3,621.57 290.2,572.36 436.0,523.16 581.8,473.95 727.6,424.72 873.4,375.47 873.3,375.14 727.4,424.30 581.6,473.48 435.8,522.68 290.0,571.89 144.2,621.09 -1.6,670.30 -147.4,719.50"/><polygon points="-134.4,720.12 10.0,670.93 154.3,621.73 298.7,572.54 443.0,523.34 587.4,474.14 731.7,424.92 876.1,375.68 876.0,375.36 731.6,424.50 587.2,473.67 442.9,522.87 298.5,572.06 154.2,621.26 9.8,670.45 -134.5,719.65"/><polygon points="-120.3,719.87 22.4,670.74 165.2,621.61 307.9,572.48 450.6,523.35 593.4,474.22 736.1,425.07 878.8,375.89 878.7,375.57 735.9,424.65 593.2,473.75 450.5,522.88 307.7,572.01 165.0,621.14 22.3,670.26 -120.5,719.39"/><polygon points="-107.4,720.01 33.9,670.89 175.1,621.77 316.4,572.65 457.7,523.54 599.0,474.42 740.3,425.27 881.6,376.11 881.4,375.78 740.1,424.85 598.8,473.94 457.6,523.06 316.3,572.18 175.0,621.30 33.7,670.42 -107.6,719.54"/><polygon points="-94.5,720.16 45.3,671.05 185.1,621.94 325.0,572.83 464.8,523.72 604.7,474.61 744.5,425.48 884.3,376.32 884.2,375.99 744.3,425.06 604.5,474.14 464.7,523.25 324.8,572.36 185.0,621.47 45.1,670.57 -94.7,719.68"/><polygon points="-80.5,719.90 57.7,670.86 196.0,621.81 334.2,572.77 472.4,523.73 610.6,474.69 748.9,425.63 887.1,376.54 886.9,376.21 748.7,425.20 610.5,474.22 472.2,523.26 334.0,572.30 195.8,621.34 57.6,670.39 -80.6,719.43"/><polygon points="-67.6,720.04 69.2,671.01 206.0,621.98 342.8,572.95 479.5,523.92 616.3,474.89 753.1,425.83 889.8,376.75 889.7,376.42 752.9,425.41 616.1,474.42 479.4,523.45 342.6,572.48 205.8,621.51 69.0,670.54 -67.7,719.57"/><polygon points="-54.7,720.19 80.7,671.17 216.0,622.15 351.3,573.12 486.7,524.10 622.0,475.08 757.3,426.04 892.6,376.97 892.5,376.64 757.1,425.61 621.8,474.61 486.5,523.63 351.2,572.65 215.8,621.68 80.5,670.70 -54.8,719.72"/><polygon points="-40.6,719.93 93.1,670.98 226.8,622.02 360.5,573.07 494.3,524.12 628.0,475.16 761.7,426.19 895.4,377.19 895.3,376.86 761.5,425.76 627.8,474.69 494.1,523.65 360.4,572.60 226.6,621.55 92.9,670.51 -40.8,719.46"/><polygon points="-14.8,720.22 116.0,671.29 246.9,622.36 377.7,573.42 508.5,524.49 639.4,475.56 770.2,426.61 901.0,377.62 900.9,377.29 770.0,426.18 639.2,475.09 508.4,524.02 377.5,572.95 246.7,621.89 115.9,670.82 -15.0,719.75"/><polygon points="-0.8,719.96 128.5,671.10 257.7,622.23 386.9,573.37 516.2,524.51 645.4,475.64 774.6,426.76 903.8,377.84 903.7,377.51 774.5,426.33 645.2,475.17 516.0,524.04 386.7,572.90 257.5,621.77 128.3,670.63 -1.0,719.49"/><polygon points="12.2,720.11 139.9,671.25 267.7,622.40 395.5,573.55 523.3,524.69 651.1,475.84 778.9,426.97 906.7,378.07 906.5,377.73 778.7,426.54 650.9,475.37 523.1,524.23 395.3,573.08 267.6,621.93 139.8,670.79 12.0,719.64"/><polygon points="26.1,719.85 152.3,671.07 278.5,622.28 404.7,573.49 530.9,524.71 657.1,475.92 783.3,427.12 909.5,378.29 909.4,377.95 783.2,426.69 657.0,475.46 530.8,524.24 404.6,573.03 278.4,621.81 152.2,670.60 26.0,719.38"/><polygon points="39.1,719.99 163.8,671.22 288.6,622.45 413.3,573.67 538.1,524.90 662.9,476.12 787.6,427.33 912.4,378.51 912.2,378.18 787.4,426.90 662.7,475.66 537.9,524.43 413.2,573.21 288.4,621.98 163.7,670.76 38.9,719.53"/><polygon points="52.0,720.14 175.3,671.38 298.7,622.61 422.0,573.85 545.3,525.09 668.6,476.32 791.9,427.55 915.2,378.73 915.1,378.40 791.8,427.11 668.4,475.86 545.1,524.62 421.8,573.39 298.5,622.15 175.2,670.91 51.8,719.67"/><polygon points="66.0,719.88 187.7,671.19 309.5,622.49 431.2,573.80 552.9,525.11 674.7,476.41 796.4,427.70 918.1,378.96 918.0,378.62 796.2,427.27 674.5,475.95 552.7,524.64 431.0,573.34 309.3,622.03 187.5,670.72 65.8,719.42"/><polygon points="78.9,720.03 199.2,671.34 319.5,622.66 439.8,573.98 560.1,525.30 680.4,476.61 800.7,427.92 921.0,379.18 920.8,378.85 800.5,427.48 680.2,476.15 559.9,524.83 439.6,573.52 319.3,622.20 199.0,670.88 78.8,719.56"/><polygon points="91.9,720.17 210.8,671.50 329.6,622.83 448.5,574.16 567.3,525.49 686.2,476.82 805.0,428.13 923.9,379.41 923.7,379.07 804.9,427.69 686.0,476.35 567.1,525.02 448.3,573.70 329.4,622.37 210.6,671.04 91.7,719.71"/><polygon points="118.8,720.06 234.7,671.47 350.5,622.88 466.3,574.29 582.2,525.70 698.0,477.11 813.9,428.51 929.7,379.86 929.6,379.53 813.7,428.06 697.8,476.65 582.0,525.24 466.2,573.83 350.3,622.42 234.5,671.01 118.6,719.60"/><polygon points="131.8,720.20 246.2,671.63 360.6,623.05 475.0,574.47 589.4,525.89 703.8,477.31 818.2,428.72 932.6,380.09 932.5,379.75 818.1,428.28 703.6,476.85 589.2,525.43 474.8,574.01 360.4,622.59 246.0,671.17 131.6,719.74"/><polygon points="145.7,719.95 258.5,671.44 371.4,622.93 484.2,574.42 597.1,525.91 709.9,477.40 822.8,428.88 935.6,380.32 935.4,379.98 822.6,428.44 709.7,476.94 596.9,525.45 484.0,573.96 371.2,622.47 258.3,670.98 145.5,719.49"/><polygon points="158.7,720.09 270.1,671.59 381.5,623.10 492.9,574.60 604.3,526.10 715.7,477.61 827.1,429.10 938.5,380.55 938.4,380.21 826.9,428.66 715.5,477.15 604.1,525.64 492.7,574.14 381.3,622.64 269.9,671.14 158.5,719.63"/><polygon points="172.6,719.83 282.4,671.41 392.3,622.98 502.1,574.55 612.0,526.12 721.8,477.70 831.7,429.26 941.5,380.78 941.3,380.44 831.5,428.82 721.6,477.24 611.8,525.67 501.9,574.09 392.1,622.52 282.2,670.95 172.4,719.38"/><polygon points="185.6,719.98 294.0,671.56 402.4,623.15 510.8,574.73 619.2,526.32 727.7,477.90 836.1,429.48 944.5,381.02 944.3,380.67 835.9,429.04 727.5,477.45 619.0,525.86 510.6,574.28 402.2,622.69 293.8,671.11 185.4,719.52"/><polygon points="198.6,720.12 305.6,671.72 412.5,623.32 519.5,574.92 626.5,526.51 733.5,478.11 840.5,429.70 947.5,381.25 947.3,380.91 840.3,429.26 733.3,477.66 626.3,526.06 519.3,574.46 412.3,622.86 305.3,671.27 198.4,719.67"/><polygon points="212.4,719.87 317.9,671.53 423.3,623.20 528.7,574.87 634.2,526.54 739.6,478.20 845.0,429.87 950.4,381.48 950.3,381.14 844.8,429.42 739.4,477.75 634.0,526.08 528.5,574.41 423.1,622.75 317.7,671.08 212.2,719.41"/><polygon points="225.4,720.01 329.5,671.69 433.5,623.37 537.5,575.05 641.5,526.73 745.5,478.41 849.5,430.09 953.5,381.72 953.3,381.37 849.3,429.64 745.3,477.96 641.3,526.28 537.3,574.60 433.2,622.92 329.2,671.24 225.2,719.56"/><polygon points="252.3,719.90 353.3,671.66 454.4,623.42 555.4,575.19 656.4,526.95 757.5,478.72 858.5,430.48 959.5,382.19 959.3,381.85 858.3,430.03 757.3,478.26 656.2,526.50 555.2,574.74 454.2,622.97 353.1,671.21 252.1,719.45"/><polygon points="265.3,720.04 364.9,671.82 464.5,623.60 564.2,575.37 663.8,527.15 763.4,478.93 863.0,430.70 962.6,382.43 962.4,382.08 862.8,430.25 763.1,478.48 663.5,526.70 563.9,574.92 464.3,623.15 364.7,671.37 265.1,719.59"/><polygon points="278.3,720.19 376.5,671.98 474.7,623.77 572.9,575.56 671.1,527.35 769.3,479.14 867.5,430.93 965.6,382.67 965.4,382.32 867.2,430.48 769.1,478.69 670.9,526.90 572.7,575.11 474.5,623.32 376.3,671.53 278.1,719.74"/><polygon points="292.2,719.93 388.8,671.79 485.5,623.65 582.1,575.51 678.8,527.37 775.4,479.23 872.1,431.09 968.7,382.90 968.5,382.56 871.8,430.65 775.2,478.79 678.5,526.93 581.9,575.06 485.3,623.20 388.6,671.34 292.0,719.48"/><polygon points="305.2,720.07 400.4,671.95 495.7,623.82 590.9,575.70 686.1,527.57 781.3,479.45 876.6,431.32 971.8,383.14 971.6,382.80 876.3,430.87 781.1,479.00 685.9,527.13 590.7,575.25 495.4,623.38 400.2,671.50 305.0,719.63"/><polygon points="318.2,720.22 412.1,672.11 505.9,623.99 599.7,575.88 693.5,527.77 787.3,479.66 881.1,431.55 974.9,383.39 974.7,383.04 880.8,431.10 787.0,479.21 693.2,527.33 599.4,575.44 505.6,623.55 411.8,671.66 318.0,719.77"/><polygon points="332.1,719.96 424.3,671.92 516.6,623.88 608.9,575.84 701.2,527.80 793.4,479.76 885.7,431.72 978.0,383.63 977.8,383.28 885.5,431.27 793.2,479.31 700.9,527.35 608.7,575.40 516.4,623.44 424.1,671.48 331.8,719.52"/><polygon points="345.1,720.10 436.0,672.08 526.8,624.05 617.7,576.03 708.5,528.00 799.4,479.97 890.2,431.95 981.1,383.87 980.9,383.52 890.0,431.50 799.2,479.53 708.3,527.56 617.4,575.58 526.6,623.61 435.7,671.64 344.9,719.66"/><polygon points="358.9,719.85 448.2,671.89 537.6,623.94 626.9,575.98 716.2,528.03 805.6,480.07 894.9,432.12 984.2,384.11 984.0,383.77 894.7,431.68 805.3,479.63 716.0,527.59 626.7,575.54 537.3,623.50 448.0,671.45 358.7,719.41"/><polygon points="385.0,720.14 471.5,672.21 558.0,624.28 644.5,576.36 731.0,528.43 817.5,480.50 904.0,432.58 990.5,384.61 990.3,384.26 903.8,432.14 817.3,480.07 730.8,527.99 644.3,575.92 557.8,623.85 471.3,671.77 384.8,719.70"/><polygon points="398.8,719.88 483.8,672.02 568.8,624.17 653.7,576.31 738.7,528.46 823.7,480.61 908.7,432.75 993.7,384.85 993.5,384.51 908.5,432.32 823.5,480.17 738.5,528.02 653.5,575.88 568.5,623.73 483.5,671.59 398.5,719.44"/><polygon points="411.8,720.02 495.4,672.18 579.0,624.34 662.6,576.50 746.1,528.66 829.7,480.82 913.3,432.98 996.9,385.10 996.7,384.75 913.1,432.55 829.5,480.39 745.9,528.23 662.3,576.07 578.7,623.91 495.2,671.75 411.6,719.59"/><polygon points="424.9,720.17 507.1,672.34 589.2,624.52 671.4,576.69 753.6,528.87 835.7,481.04 917.9,433.22 1000.0,385.35 999.8,385.00 917.7,432.78 835.5,480.61 753.3,528.43 671.2,576.26 589.0,624.08 506.8,671.91 424.7,719.73"/><polygon points="438.7,719.91 519.3,672.16 600.0,624.40 680.6,576.65 761.3,528.90 842.0,481.15 922.6,433.39 1003.2,385.60 1003.0,385.25 922.4,432.96 841.7,480.72 761.0,528.47 680.4,576.22 599.7,623.97 519.1,671.73 438.4,719.48"/><polygon points="451.7,720.05 531.0,672.32 610.2,624.58 689.5,576.84 768.7,529.10 848.0,481.36 927.2,433.63 1006.5,385.85 1006.3,385.50 927.0,433.20 847.7,480.94 768.5,528.67 689.2,576.41 610.0,624.15 530.7,671.89 451.5,719.62"/><polygon points="464.8,720.20 542.7,672.47 620.5,624.75 698.3,577.03 776.2,529.31 854.0,481.59 931.9,433.86 1009.7,386.10 1009.5,385.75 931.6,433.44 853.8,481.16 775.9,528.88 698.1,576.60 620.2,624.33 542.4,672.05 464.6,719.77"/><polygon points="478.6,719.94 554.9,672.29 631.2,624.64 707.6,576.99 783.9,529.34 860.3,481.69 936.6,434.04 1012.9,386.35 1012.7,386.01 936.4,433.62 860.0,481.27 783.7,528.92 707.3,576.57 631.0,624.22 554.6,671.87 478.3,719.51"/><polygon points="491.6,720.08 566.6,672.45 641.5,624.81 716.5,577.18 791.4,529.55 866.3,481.91 941.3,434.28 1016.2,386.61 1016.0,386.26 941.0,433.86 866.1,481.49 791.1,529.12 716.2,576.76 641.3,624.39 566.3,672.03 491.4,719.66"/><polygon points="518.4,719.97 590.5,672.42 662.5,624.88 734.6,577.33 806.6,529.79 878.7,482.24 950.7,434.70 1022.8,387.12 1022.5,386.77 950.5,434.28 878.4,481.83 806.4,529.37 734.3,576.92 662.3,624.46 590.2,672.01 518.2,719.55"/><polygon points="531.5,720.11 602.2,672.58 672.8,625.05 743.5,577.53 814.1,530.00 884.8,482.47 955.4,434.94 1026.0,387.37 1025.8,387.03 955.1,434.52 884.5,482.05 813.9,529.58 743.2,577.11 672.6,624.64 601.9,672.17 531.3,719.70"/><polygon points="545.2,719.85 614.4,672.40 683.6,624.94 752.7,577.49 821.9,530.03 891.1,482.58 960.2,435.12 1029.4,387.63 1029.1,387.29 959.9,434.71 890.8,482.16 821.6,529.62 752.4,577.08 683.3,624.53 614.1,671.99 545.0,719.44"/><polygon points="558.4,720.00 626.1,672.56 693.9,625.12 761.6,577.68 829.4,530.24 897.2,482.80 964.9,435.36 1032.7,387.89 1032.4,387.55 964.7,434.95 896.9,482.39 829.1,529.83 761.4,577.27 693.6,624.71 625.8,672.15 558.1,719.59"/><polygon points="571.5,720.14 637.8,672.72 704.2,625.30 770.6,577.87 836.9,530.45 903.3,483.03 969.7,435.60 1036.0,388.15 1035.8,387.81 969.4,435.20 903.0,482.62 836.6,530.04 770.3,577.47 703.9,624.89 637.5,672.31 571.2,719.74"/><polygon points="585.1,719.88 650.0,672.53 714.9,625.19 779.8,577.84 844.7,530.49 909.6,483.14 974.5,435.79 1039.4,388.41 1039.1,388.07 974.2,435.39 909.3,482.73 844.4,530.08 779.5,577.43 714.6,624.78 649.7,672.13 584.8,719.48"/><polygon points="598.3,720.03 661.8,672.69 725.3,625.36 788.8,578.03 852.3,530.70 915.8,483.37 979.3,436.03 1042.7,388.67 1042.5,388.33 979.0,435.63 915.5,482.96 852.0,530.30 788.5,577.63 725.0,624.96 661.5,672.29 598.0,719.63"/><polygon points="611.4,720.17 673.5,672.86 735.6,625.54 797.7,578.22 859.8,530.91 921.9,483.59 984.0,436.28 1046.1,388.93 1045.9,388.60 983.7,435.88 921.6,483.20 859.5,530.51 797.4,577.83 735.3,625.14 673.2,672.46 611.1,719.77"/><polygon points="625.0,719.91 685.7,672.67 746.3,625.43 807.0,578.19 867.6,530.95 928.2,483.71 988.9,436.47 1049.5,389.20 1049.2,388.86 988.6,436.07 927.9,483.31 867.3,530.55 806.7,577.79 746.0,625.04 685.4,672.28 624.7,719.52"/><polygon points="651.8,719.80 709.6,672.65 767.4,625.50 825.2,578.35 883.0,531.20 940.8,484.05 998.6,436.90 1056.3,389.73 1056.1,389.39 998.2,436.52 940.5,483.66 882.7,530.81 824.9,577.96 767.1,625.11 709.3,672.26 651.5,719.41"/><polygon points="664.9,719.94 721.4,672.81 777.8,625.68 834.2,578.55 890.6,531.41 947.0,484.28 1003.4,437.15 1059.8,389.99 1059.5,389.66 1003.1,436.77 946.7,483.90 890.2,531.03 833.8,578.16 777.4,625.29 721.0,672.42 664.6,719.56"/><polygon points="678.1,720.08 733.1,672.97 788.1,625.86 843.2,578.74 898.2,531.63 953.2,484.51 1008.2,437.40 1063.2,390.26 1062.9,389.93 1007.9,437.02 952.9,484.13 897.8,531.25 842.8,578.36 787.8,625.48 732.8,672.59 677.8,719.70"/><polygon points="691.7,719.82 745.3,672.79 798.8,625.75 852.4,578.71 906.0,531.67 959.6,484.63 1013.1,437.59 1066.7,390.53 1066.4,390.20 1012.8,437.22 959.2,484.26 905.7,531.29 852.1,578.33 798.5,625.37 744.9,672.41 691.4,719.45"/><polygon points="704.9,719.97 757.0,672.95 809.2,625.93 861.4,578.91 913.6,531.88 965.8,484.86 1018.0,437.84 1070.2,390.80 1069.9,390.47 1017.7,437.47 965.5,484.49 913.3,531.51 861.1,578.53 808.9,625.55 756.7,672.58 704.5,719.60"/><polygon points="718.0,720.11 768.8,673.11 819.6,626.10 870.4,579.10 921.2,532.10 972.1,485.10 1022.9,438.09 1073.6,391.07 1073.3,390.75 1022.5,437.73 971.7,484.73 920.9,531.73 870.1,578.74 819.3,625.74 768.5,672.74 717.7,719.74"/><polygon points="731.6,719.85 781.0,672.92 830.3,626.00 879.7,579.07 929.1,532.14 978.4,485.22 1027.8,438.29 1077.2,391.34 1076.8,391.02 1027.5,437.93 978.1,484.85 928.7,531.78 879.4,578.71 830.0,625.63 780.6,672.56 731.3,719.49"/><polygon points="744.8,719.99 792.8,673.09 840.8,626.18 888.7,579.27 936.7,532.36 984.7,485.45 1032.7,438.54 1080.7,391.61 1080.4,391.30 1032.4,438.19 984.4,485.09 936.4,532.00 888.4,578.91 840.4,625.82 792.4,672.73 744.4,719.64"/><polygon points="758.0,720.14 804.6,673.25 851.2,626.36 897.8,579.47 944.4,532.58 991.0,485.69 1037.6,438.80 1084.2,391.89 1083.9,391.57 1037.3,438.44 990.7,485.33 944.0,532.22 897.4,579.11 850.8,626.00 804.2,672.89 757.6,719.78"/><polygon points="784.7,720.02 828.5,673.22 872.3,626.43 916.1,579.63 959.9,532.84 1003.7,486.05 1047.5,439.25 1091.3,392.44 1091.0,392.13 1047.2,438.91 1003.4,485.70 959.6,532.50 915.8,579.29 871.9,626.09 828.1,672.88 784.3,719.68"/><polygon points="797.9,720.16 840.3,673.39 882.8,626.61 925.2,579.83 967.6,533.06 1010.1,486.28 1052.5,439.51 1094.9,392.72 1094.6,392.41 1052.1,439.17 1009.7,485.95 967.3,532.72 924.8,579.50 882.4,626.27 840.0,673.05 797.5,719.83"/><polygon points="811.4,719.90 852.5,673.20 893.5,626.50 934.5,579.80 975.5,533.11 1016.5,486.41 1057.5,439.71 1098.5,392.99 1098.2,392.70 1057.1,439.38 1016.1,486.08 975.1,532.78 934.1,579.47 893.1,626.17 852.1,672.87 811.1,719.57"/><polygon points="824.6,720.04 864.3,673.36 903.9,626.68 943.6,580.01 983.2,533.33 1022.8,486.65 1062.5,439.97 1102.1,393.27 1101.8,392.98 1062.1,439.64 1022.5,486.32 982.8,533.00 943.2,579.68 903.5,626.36 863.9,673.04 824.3,719.72"/><polygon points="838.2,719.78 876.4,673.18 914.6,626.58 952.8,579.98 991.1,533.37 1029.3,486.77 1067.5,440.17 1105.7,393.55 1105.4,393.26 1067.1,439.85 1028.9,486.45 990.7,533.06 952.5,579.66 914.2,626.26 876.0,672.86 837.8,719.47"/><polygon points="851.4,719.92 888.2,673.34 925.1,626.76 962.0,580.18 998.8,533.59 1035.7,487.01 1072.5,440.43 1109.4,393.83 1109.0,393.55 1072.1,440.12 1035.3,486.70 998.4,533.28 961.6,579.87 924.7,626.45 887.8,673.03 851.0,719.61"/><polygon points="864.6,720.07 900.1,673.50 935.6,626.94 971.1,580.38 1006.6,533.82 1042.1,487.25 1077.6,440.69 1113.0,394.12 1112.7,393.84 1077.2,440.39 1041.7,486.95 1006.2,533.51 970.7,580.08 935.2,626.64 899.7,673.20 864.2,719.76"/><polygon points="878.1,719.81 912.2,673.32 946.3,626.84 980.4,580.35 1014.5,533.87 1048.5,487.38 1082.6,440.90 1116.7,394.40 1116.3,394.13 1082.2,440.60 1048.1,487.08 1014.0,533.57 980.0,580.05 945.9,626.54 911.8,673.03 877.7,719.51"/><polygon points="891.3,719.95 924.0,673.48 956.8,627.02 989.5,580.55 1022.2,534.09 1055.0,487.62 1087.7,441.16 1120.4,394.68 1120.0,394.42 1087.3,440.87 1054.5,487.34 1021.8,533.80 989.1,580.26 956.3,626.73 923.6,673.19 890.9,719.66"/><polygon points="918.0,719.83 948.0,673.46 978.0,627.09 1007.9,580.73 1037.9,534.36 1067.9,488.00 1097.9,441.63 1127.8,395.26 1127.4,395.00 1097.4,441.36 1067.5,487.72 1037.5,534.09 1007.5,580.46 977.5,626.82 947.6,673.19 917.6,719.56"/><polygon points="931.2,719.97 959.8,673.62 988.5,627.28 1017.1,580.93 1045.7,534.59 1074.3,488.24 1103.0,441.90 1131.6,395.54 1131.2,395.30 1102.5,441.63 1073.9,487.98 1045.3,534.32 1016.7,580.67 988.0,627.01 959.4,673.36 930.8,719.70"/><polygon points="944.5,720.11 971.7,673.78 999.0,627.46 1026.3,581.14 1053.5,534.81 1080.8,488.49 1108.1,442.16 1135.3,395.83 1134.9,395.59 1107.6,441.91 1080.4,488.23 1053.1,534.56 1025.8,580.88 998.6,627.21 971.3,673.53 944.0,719.85"/><polygon points="957.9,719.85 983.8,673.60 1009.7,627.36 1035.6,581.11 1061.5,534.86 1087.3,488.62 1113.2,442.37 1139.1,396.12 1138.7,395.89 1112.8,442.13 1086.9,488.37 1061.0,534.62 1035.1,580.87 1009.3,627.11 983.4,673.36 957.5,719.60"/><polygon points="971.2,719.99 995.7,673.76 1020.2,627.54 1044.8,581.31 1069.3,535.09 1093.8,488.87 1118.4,442.64 1142.9,396.41 1142.5,396.19 1117.9,442.41 1093.4,488.63 1068.9,534.86 1044.3,581.08 1019.8,627.30 995.3,673.53 970.7,719.75"/><polygon points="984.6,719.72 1007.8,673.58 1030.9,627.43 1054.1,581.29 1077.2,535.14 1100.4,489.00 1123.5,442.85 1146.7,396.70 1146.3,396.49 1123.1,442.63 1099.9,488.77 1076.8,534.92 1053.6,581.06 1030.5,627.21 1007.3,673.36 984.2,719.50"/><polygon points="997.9,719.86 1019.7,673.74 1041.5,627.62 1063.3,581.49 1085.1,535.37 1106.9,489.25 1128.7,443.12 1150.5,397.00 1150.1,396.79 1128.2,442.91 1106.4,489.03 1084.6,535.16 1062.8,581.28 1041.0,627.40 1019.2,673.53 997.4,719.65"/><polygon points="1011.1,720.00 1031.6,673.90 1052.0,627.80 1072.5,581.70 1093.0,535.60 1113.4,489.50 1133.9,443.39 1154.3,397.29 1153.9,397.09 1133.4,443.19 1113.0,489.29 1092.5,535.40 1072.0,581.50 1051.6,627.60 1031.1,673.70 1010.7,719.80"/><polygon points="1024.5,719.74 1043.6,673.72 1062.7,627.70 1081.8,581.68 1100.9,535.65 1120.0,489.63 1139.1,443.61 1158.2,397.58 1157.7,397.40 1138.6,443.42 1119.5,489.44 1100.5,535.46 1081.4,581.48 1062.3,627.51 1043.2,673.53 1024.1,719.55"/><polygon points="1051.1,720.02 1067.5,674.04 1083.9,628.07 1100.3,582.09 1116.7,536.11 1133.1,490.13 1149.5,444.16 1165.9,398.18 1165.5,398.01 1149.1,443.99 1132.6,489.97 1116.2,535.94 1099.8,581.92 1083.4,627.90 1067.0,673.88 1050.6,719.85"/><polygon points="1064.5,719.76 1079.5,673.86 1094.6,627.96 1109.6,582.07 1124.7,536.17 1139.7,490.27 1154.8,444.37 1169.8,398.48 1169.4,398.32 1154.3,444.22 1139.3,490.12 1124.2,536.01 1109.2,581.91 1094.1,627.81 1079.0,673.70 1064.0,719.60"/><polygon points="1077.7,719.90 1091.5,674.02 1105.2,628.15 1118.9,582.27 1132.6,536.40 1146.3,490.53 1160.0,444.65 1173.8,398.78 1173.3,398.63 1159.6,444.51 1145.8,490.38 1132.1,536.26 1118.4,582.13 1104.7,628.00 1091.0,673.88 1077.3,719.75"/><polygon points="1091.0,720.03 1103.4,674.18 1115.8,628.33 1128.2,582.48 1140.6,536.63 1152.9,490.78 1165.3,444.93 1177.7,399.08 1177.2,398.95 1164.8,444.80 1152.5,490.65 1140.1,536.50 1127.7,582.35 1115.3,628.20 1102.9,674.05 1090.5,719.90"/><polygon points="1104.4,719.77 1115.4,674.00 1126.5,628.23 1137.5,582.46 1148.5,536.69 1159.6,490.92 1170.6,445.15 1181.7,399.38 1181.2,399.26 1170.1,445.03 1159.1,490.80 1148.1,536.57 1137.0,582.34 1126.0,628.11 1115.0,673.88 1103.9,719.65"/><polygon points="1117.7,719.91 1127.4,674.16 1137.1,628.42 1146.8,582.67 1156.5,536.92 1166.2,491.17 1175.9,445.43 1185.6,399.68 1185.1,399.58 1175.4,445.32 1165.7,491.07 1156.0,536.82 1146.3,582.57 1136.6,628.31 1126.9,674.06 1117.2,719.81"/><polygon points="1131.1,719.65 1139.4,673.98 1147.8,628.31 1156.2,582.65 1164.5,536.98 1172.9,491.32 1181.2,445.65 1189.6,399.98 1189.1,399.89 1180.8,445.56 1172.4,491.23 1164.0,536.89 1155.7,582.56 1147.3,628.22 1138.9,673.89 1130.6,719.56"/><polygon points="1144.3,719.78 1151.4,674.14 1158.4,628.50 1165.5,582.86 1172.5,537.22 1179.5,491.57 1186.6,445.93 1193.6,400.29 1193.1,400.21 1186.1,445.86 1179.0,491.50 1172.0,537.14 1165.0,582.78 1157.9,628.42 1150.9,674.07 1143.8,719.71"/><polygon points="1157.6,719.92 1163.4,674.30 1169.1,628.69 1174.8,583.07 1180.5,537.45 1186.2,491.83 1191.9,446.21 1197.6,400.60 1197.1,400.53 1191.4,446.15 1185.7,491.77 1180.0,537.39 1174.3,583.01 1168.6,628.62 1162.9,674.24 1157.1,719.86"/><polygon points="1184.3,719.80 1187.4,674.28 1190.4,628.77 1193.5,583.26 1196.5,537.75 1199.6,492.24 1202.7,446.73 1205.7,401.21 1205.2,401.18 1202.2,446.69 1199.1,492.20 1196.0,537.72 1193.0,583.23 1189.9,628.74 1186.9,674.25 1183.8,719.76"/><polygon points="1197.6,719.93 1199.3,674.45 1201.1,628.96 1202.8,583.47 1204.6,537.99 1206.3,492.50 1208.1,447.01 1209.8,401.52 1209.3,401.50 1207.6,446.99 1205.8,492.48 1204.1,537.97 1202.3,583.45 1200.6,628.94 1198.8,674.43 1197.1,719.91"/><polygon points="1210.9,719.67 1211.3,674.27 1211.8,628.86 1212.2,583.46 1212.6,538.05 1213.1,492.65 1213.5,447.24 1213.9,401.84 1213.4,401.83 1213.0,447.24 1212.6,492.64 1212.1,538.05 1211.7,583.45 1211.3,628.86 1210.8,674.26 1210.4,719.67"/><polygon points="1224.2,719.81 1223.3,674.43 1222.5,629.05 1221.6,583.67 1220.7,538.29 1219.8,492.91 1218.9,447.53 1218.0,402.15 1217.5,402.16 1218.4,447.54 1219.3,492.92 1220.2,538.30 1221.1,583.68 1222.0,629.06 1222.8,674.44 1223.7,719.82"/><polygon points="1237.6,719.95 1235.4,674.59 1233.2,629.24 1231.0,583.88 1228.8,538.53 1226.6,493.17 1224.4,447.82 1222.2,402.46 1221.7,402.49 1223.9,447.84 1226.1,493.20 1228.3,538.55 1230.5,583.91 1232.7,629.26 1234.9,674.62 1237.1,719.97"/><polygon points="1250.9,719.68 1247.3,674.41 1243.8,629.14 1240.3,583.87 1236.8,538.60 1233.3,493.32 1229.8,448.05 1226.3,402.78 1225.8,402.82 1229.3,448.09 1232.8,493.36 1236.3,538.63 1239.8,583.91 1243.3,629.18 1246.8,674.45 1250.4,719.72"/><polygon points="1264.2,719.82 1259.4,674.57 1254.6,629.33 1249.7,584.08 1244.9,538.84 1240.1,493.59 1235.3,448.34 1230.5,403.10 1230.0,403.15 1234.8,448.40 1239.6,493.64 1244.4,538.89 1249.2,584.13 1254.1,629.38 1258.9,674.63 1263.7,719.87"/><polygon points="1277.5,719.96 1271.4,674.74 1265.3,629.52 1259.2,584.30 1253.0,539.08 1246.9,493.86 1240.8,448.64 1234.7,403.42 1234.2,403.49 1240.3,448.71 1246.4,493.93 1252.5,539.14 1258.7,584.36 1264.8,629.58 1270.9,674.80 1277.0,720.02"/><polygon points="1290.8,719.69 1283.4,674.56 1276.0,629.42 1268.5,584.28 1261.1,539.15 1253.7,494.01 1246.3,448.88 1238.9,403.74 1238.4,403.82 1245.8,448.96 1253.2,494.09 1260.6,539.23 1268.1,584.37 1275.5,629.50 1282.9,674.64 1290.3,719.77"/><polygon points="1317.4,719.57 1307.4,674.54 1297.4,629.52 1287.4,584.49 1277.4,539.46 1267.4,494.44 1257.4,449.41 1247.3,404.39 1246.9,404.49 1256.9,449.52 1266.9,494.55 1276.9,539.57 1286.9,584.60 1296.9,629.62 1306.9,674.65 1316.9,719.68"/><polygon points="1330.7,719.71 1319.4,674.71 1308.1,629.71 1296.8,584.71 1285.5,539.71 1274.2,494.71 1262.9,449.71 1251.6,404.71 1251.1,404.83 1262.4,449.83 1273.7,494.83 1285.0,539.83 1296.3,584.83 1307.6,629.83 1319.0,674.83 1330.3,719.83"/><polygon points="1344.1,719.85 1331.5,674.87 1318.9,629.90 1306.3,584.93 1293.7,539.96 1281.1,494.98 1268.5,450.01 1255.9,405.04 1255.4,405.17 1268.0,450.15 1280.6,495.12 1293.2,540.09 1305.8,585.06 1318.4,630.04 1331.0,675.01 1343.6,719.98"/><polygon points="1357.3,719.58 1343.5,674.69 1329.6,629.81 1315.7,584.92 1301.8,540.03 1288.0,495.14 1274.1,450.26 1260.2,405.37 1259.7,405.52 1273.6,450.40 1287.5,495.29 1301.4,540.18 1315.2,585.07 1329.1,629.95 1343.0,674.84 1356.9,719.73"/><polygon points="1370.7,719.72 1355.5,674.86 1340.4,630.00 1325.2,585.14 1310.0,540.28 1294.9,495.42 1279.7,450.56 1264.5,405.70 1264.0,405.86 1279.2,450.72 1294.4,495.58 1309.6,540.44 1324.7,585.30 1339.9,630.16 1355.1,675.02 1370.2,719.88"/><polygon points="1384.1,719.86 1367.6,675.03 1351.1,630.19 1334.7,585.36 1318.2,540.53 1301.8,495.70 1285.3,450.86 1268.9,406.03 1268.4,406.20 1284.9,451.04 1301.3,495.87 1317.8,540.70 1334.2,585.53 1350.7,630.37 1367.1,675.20 1383.6,720.03"/><polygon points="1397.3,719.60 1379.6,674.85 1361.8,630.10 1344.1,585.36 1326.4,540.61 1308.7,495.86 1291.0,451.11 1273.2,406.37 1272.8,406.55 1290.5,451.30 1308.2,496.05 1325.9,540.79 1343.6,585.54 1361.4,630.29 1379.1,675.03 1396.8,719.78"/><polygon points="1410.6,719.74 1391.6,675.02 1372.6,630.30 1353.6,585.58 1334.6,540.86 1315.6,496.14 1296.6,451.42 1277.6,406.70 1277.2,406.90 1296.2,451.62 1315.2,496.34 1334.2,541.06 1353.2,585.77 1372.2,630.49 1391.2,675.21 1410.2,719.93"/><polygon points="1424.0,719.88 1403.7,675.19 1383.5,630.49 1363.2,585.80 1342.9,541.11 1322.6,496.42 1302.3,451.73 1282.0,407.04 1281.6,407.25 1301.9,451.94 1322.1,496.63 1342.4,541.32 1362.7,586.01 1383.0,630.70 1403.3,675.39 1423.6,720.08"/><polygon points="1450.6,719.75 1427.8,675.18 1405.0,630.60 1382.2,586.03 1359.3,541.45 1336.5,496.87 1313.7,452.30 1290.9,407.72 1290.4,407.95 1313.3,452.53 1336.1,497.10 1358.9,541.68 1381.7,586.25 1404.5,630.83 1427.3,675.41 1450.2,719.98"/><polygon points="1463.8,719.49 1439.7,675.00 1415.7,630.51 1391.6,586.02 1367.5,541.53 1343.5,497.04 1319.4,452.55 1295.4,408.07 1294.9,408.30 1319.0,452.79 1343.0,497.28 1367.1,541.77 1391.2,586.26 1415.2,630.75 1439.3,675.24 1463.3,719.73"/><polygon points="1477.2,719.63 1451.8,675.17 1426.5,630.71 1401.2,586.25 1375.8,541.79 1350.5,497.33 1325.2,452.87 1299.8,408.41 1299.4,408.66 1324.7,453.12 1350.1,497.58 1375.4,542.04 1400.7,586.50 1426.1,630.96 1451.4,675.42 1476.7,719.88"/><polygon points="1490.6,719.77 1464.0,675.34 1437.4,630.91 1410.8,586.48 1384.2,542.05 1357.6,497.62 1331.0,453.19 1304.4,408.76 1303.9,409.01 1330.5,453.45 1357.1,497.88 1383.7,542.31 1410.3,586.74 1436.9,631.17 1463.5,675.60 1490.1,720.03"/><polygon points="1503.7,719.51 1475.9,675.17 1448.1,630.82 1420.2,586.48 1392.4,542.14 1364.6,497.79 1336.7,453.45 1308.9,409.11 1308.5,409.37 1336.3,453.72 1364.1,498.06 1392.0,542.40 1419.8,586.75 1447.6,631.09 1475.5,675.43 1503.3,719.78"/><polygon points="1517.1,719.65 1488.0,675.34 1458.9,631.02 1429.8,586.71 1400.7,542.40 1371.6,498.08 1342.5,453.77 1313.4,409.46 1313.0,409.73 1342.1,454.05 1371.2,498.36 1400.3,542.67 1429.4,586.99 1458.5,631.30 1487.6,675.61 1516.7,719.93"/><polygon points="1530.5,719.79 1500.2,675.51 1469.8,631.23 1439.5,586.94 1409.1,542.66 1378.7,498.38 1348.4,454.09 1318.0,409.81 1317.6,410.09 1348.0,454.38 1378.3,498.66 1408.7,542.94 1439.0,587.23 1469.4,631.51 1499.8,675.79 1530.1,720.08"/><polygon points="1543.7,719.53 1512.1,675.34 1480.5,631.14 1448.9,586.95 1417.4,542.75 1385.8,498.56 1354.2,454.36 1322.6,410.16 1322.2,410.46 1353.8,454.65 1385.4,498.85 1416.9,543.04 1448.5,587.24 1480.1,631.43 1511.7,675.63 1543.3,719.82"/><polygon points="1557.1,719.67 1524.3,675.51 1491.4,631.34 1458.6,587.18 1425.7,543.01 1392.9,498.85 1360.1,454.69 1327.2,410.52 1326.8,410.82 1359.7,454.98 1392.5,499.15 1425.3,543.31 1458.2,587.48 1491.0,631.64 1523.9,675.81 1556.7,719.97"/><polygon points="1583.6,719.55 1548.3,675.51 1513.0,631.46 1477.7,587.42 1442.4,543.37 1407.1,499.33 1371.8,455.28 1336.5,411.24 1336.1,411.55 1371.4,455.60 1406.7,499.64 1442.0,543.69 1477.3,587.73 1512.6,631.78 1547.9,675.82 1583.2,719.87"/><polygon points="1597.1,719.70 1560.5,675.68 1524.0,631.67 1487.4,587.66 1450.9,543.64 1414.3,499.63 1377.8,455.61 1341.2,411.60 1340.8,411.92 1377.4,455.93 1413.9,499.95 1450.5,543.96 1487.0,587.97 1523.6,631.99 1560.1,676.00 1596.7,720.02"/><polygon points="1600.1,707.69 1563.8,665.44 1527.4,623.20 1491.1,580.95 1454.8,538.70 1418.5,496.46 1382.2,454.21 1345.9,411.97 1345.5,412.29 1381.8,454.54 1418.2,496.78 1454.5,539.03 1490.8,581.28 1527.1,623.52 1563.4,665.77 1599.7,708.02"/><polygon points="1600.0,693.06 1564.4,652.95 1528.8,612.85 1493.2,572.75 1457.5,532.64 1421.9,492.54 1386.3,452.43 1350.7,412.33 1350.3,412.66 1385.9,452.77 1421.5,492.87 1457.2,532.97 1492.8,573.08 1528.4,613.18 1564.0,653.29 1599.7,693.39"/><polygon points="1600.0,679.35 1565.1,641.26 1530.1,603.17 1495.2,565.07 1460.2,526.98 1425.3,488.89 1390.4,450.79 1355.4,412.70 1355.0,413.04 1390.0,451.13 1424.9,489.22 1459.9,527.32 1494.8,565.41 1529.8,603.50 1564.7,641.60 1599.6,679.69"/><polygon points="1600.0,666.49 1565.7,630.28 1531.5,594.08 1497.2,557.88 1463.0,521.68 1428.7,485.47 1394.4,449.27 1360.2,413.07 1359.8,413.41 1394.1,449.61 1428.3,485.82 1462.6,522.02 1496.8,558.22 1531.1,594.43 1565.4,630.63 1599.6,666.83"/><polygon points="1600.0,654.39 1566.4,619.97 1532.8,585.54 1499.3,551.12 1465.7,516.70 1432.1,482.28 1398.6,447.86 1365.0,413.44 1364.6,413.79 1398.2,448.21 1431.8,482.63 1465.3,517.05 1498.9,551.47 1532.5,585.89 1566.0,620.32 1599.6,654.74"/><polygon points="1599.9,642.99 1567.1,610.25 1534.2,577.51 1501.3,544.77 1468.4,512.03 1435.6,479.29 1402.7,446.55 1369.8,413.81 1369.5,414.17 1402.3,446.91 1435.2,479.65 1468.1,512.38 1501.0,545.12 1533.8,577.86 1566.7,610.60 1599.6,643.34"/><polygon points="1599.9,632.22 1567.7,601.08 1535.6,569.93 1503.4,538.78 1471.2,507.63 1439.0,476.49 1406.8,445.34 1374.7,414.19 1374.3,414.55 1406.5,445.70 1438.7,476.84 1470.8,507.99 1503.0,539.14 1535.2,570.29 1567.4,601.44 1599.6,632.58"/><polygon points="1600.1,612.66 1569.3,584.41 1538.5,556.17 1507.7,527.92 1476.9,499.68 1446.1,471.43 1415.2,443.19 1384.4,414.95 1384.1,415.31 1414.9,443.56 1445.7,471.80 1476.5,500.05 1507.3,528.29 1538.2,556.54 1569.0,584.78 1599.8,613.02"/><polygon points="1600.1,603.51 1570.0,576.63 1539.9,549.74 1509.8,522.86 1479.7,495.98 1449.6,469.09 1419.5,442.21 1389.3,415.33 1389.0,415.70 1419.1,442.58 1449.2,469.47 1479.3,496.35 1509.4,523.23 1539.6,550.12 1569.7,577.00 1599.8,603.88"/><polygon points="1600.1,594.83 1570.7,569.24 1541.3,543.65 1511.9,518.06 1482.5,492.48 1453.1,466.89 1423.7,441.30 1394.3,415.71 1394.0,416.09 1423.4,441.68 1452.8,467.26 1482.2,492.85 1511.6,518.44 1541.0,544.03 1570.4,569.62 1599.8,595.20"/><polygon points="1600.1,586.57 1571.4,562.22 1542.7,537.86 1514.0,513.51 1485.3,489.16 1456.6,464.80 1427.9,440.45 1399.3,416.10 1398.9,416.48 1427.6,440.83 1456.3,465.18 1485.0,489.54 1513.7,513.89 1542.4,538.25 1571.1,562.60 1599.7,586.95"/><polygon points="1600.0,578.71 1572.1,555.54 1544.1,532.36 1516.1,509.19 1488.2,486.01 1460.2,462.84 1432.2,439.66 1404.2,416.48 1403.9,416.87 1431.9,440.04 1459.9,463.22 1487.8,486.40 1515.8,509.57 1543.8,532.75 1571.8,555.92 1599.7,579.10"/><polygon points="1600.0,571.22 1572.8,549.17 1545.5,527.12 1518.3,505.07 1491.0,483.02 1463.8,460.97 1436.5,438.92 1409.3,416.87 1409.0,417.26 1436.2,439.31 1463.5,461.36 1490.7,483.41 1518.0,505.46 1545.2,527.51 1572.5,549.56 1599.7,571.61"/><polygon points="1600.0,564.08 1573.5,543.10 1546.9,522.13 1520.4,501.16 1493.9,480.18 1467.4,459.21 1440.8,438.24 1414.3,417.27 1414.0,417.66 1440.5,438.63 1467.1,459.60 1493.6,480.58 1520.1,501.55 1546.6,522.52 1573.2,543.50 1599.7,564.47"/><polygon points="1600.0,557.25 1574.2,537.31 1548.4,517.37 1522.6,497.43 1496.8,477.48 1471.0,457.54 1445.2,437.60 1419.4,417.66 1419.1,418.05 1444.9,438.00 1470.7,457.94 1496.5,477.88 1522.3,497.82 1548.1,517.76 1573.9,537.71 1599.7,557.65"/><polygon points="1600.0,550.73 1574.9,531.77 1549.8,512.82 1524.8,493.87 1499.7,474.91 1474.6,455.96 1449.5,437.01 1424.5,418.05 1424.2,418.45 1449.2,437.41 1474.3,456.36 1499.4,475.31 1524.5,494.27 1549.5,513.22 1574.6,532.17 1599.7,551.12"/><polygon points="1600.1,538.64 1576.5,521.53 1552.9,504.42 1529.3,487.30 1505.6,470.19 1482.0,453.08 1458.4,435.97 1434.7,418.85 1434.5,419.26 1458.1,436.37 1481.7,453.48 1505.3,470.60 1529.0,487.71 1552.6,504.82 1576.2,521.94 1599.8,539.05"/><polygon points="1600.1,532.90 1577.2,516.67 1554.3,500.43 1531.5,484.19 1508.6,467.96 1485.7,451.72 1462.8,435.49 1439.9,419.25 1439.6,419.66 1462.5,435.90 1485.4,452.13 1508.3,468.37 1531.2,484.60 1554.1,500.84 1576.9,517.07 1599.8,533.31"/><polygon points="1600.1,527.39 1578.0,512.00 1555.8,496.61 1533.7,481.22 1511.5,465.83 1489.4,450.44 1467.3,435.05 1445.1,419.66 1444.8,420.07 1467.0,435.46 1489.1,450.85 1511.2,466.24 1533.4,481.63 1555.5,497.02 1577.7,512.41 1599.8,527.80"/><polygon points="1600.1,522.10 1578.7,507.52 1557.3,492.94 1535.9,478.37 1514.5,463.79 1493.1,449.22 1471.7,434.64 1450.3,420.06 1450.1,420.48 1471.5,435.05 1492.8,449.63 1514.2,464.21 1535.6,478.78 1557.0,493.36 1578.4,507.93 1599.8,522.51"/><polygon points="1600.1,517.01 1579.4,503.22 1558.8,489.43 1538.1,475.64 1517.5,461.84 1496.9,448.05 1476.2,434.26 1455.6,420.47 1455.3,420.89 1476.0,434.68 1496.6,448.47 1517.2,462.26 1537.9,476.05 1558.5,489.84 1579.1,503.63 1599.8,517.42"/><polygon points="1600.0,512.11 1580.2,499.08 1560.3,486.05 1540.4,473.01 1520.5,459.98 1500.6,446.95 1480.8,433.92 1460.9,420.88 1460.6,421.30 1480.5,434.33 1500.4,447.37 1520.2,460.40 1540.1,473.43 1560.0,486.47 1579.9,499.50 1599.8,512.53"/><polygon points="1600.0,507.40 1580.9,495.10 1561.8,482.80 1542.7,470.50 1523.5,458.20 1504.4,445.90 1485.3,433.60 1466.2,421.30 1465.9,421.72 1485.0,434.02 1504.1,446.32 1523.3,458.62 1542.4,470.92 1561.5,483.22 1580.6,495.52 1599.8,507.82"/><polygon points="1600.0,502.86 1581.6,491.27 1563.3,479.68 1544.9,468.08 1526.6,456.49 1508.2,444.90 1489.9,433.30 1471.5,421.71 1471.2,422.13 1489.6,433.73 1508.0,445.32 1526.3,456.91 1544.7,468.51 1563.0,480.10 1581.4,491.69 1599.7,503.28"/><polygon points="1600.0,498.49 1582.4,487.58 1564.8,476.67 1547.2,465.76 1529.6,454.85 1512.1,443.94 1494.5,433.04 1476.9,422.13 1476.6,422.55 1494.2,433.46 1511.8,444.37 1529.4,455.28 1547.0,466.19 1564.6,477.09 1582.1,488.00 1599.7,498.91"/><polygon points="1600.0,490.19 1583.9,480.59 1567.9,470.98 1551.8,461.38 1535.8,451.78 1519.8,442.17 1503.7,432.57 1487.7,422.97 1487.4,423.40 1503.5,433.00 1519.5,442.60 1535.5,452.21 1551.6,461.81 1567.6,471.41 1583.7,481.02 1599.7,490.62"/><polygon points="1600.1,486.35 1584.8,477.36 1569.5,468.36 1554.3,459.37 1539.0,450.38 1523.7,441.38 1508.4,432.39 1493.1,423.39 1492.9,423.82 1508.2,432.82 1523.4,441.81 1538.7,450.81 1554.0,459.80 1569.3,468.80 1584.6,477.79 1599.9,486.78"/><polygon points="1600.1,482.55 1585.6,474.16 1571.1,465.77 1556.6,457.38 1542.1,448.99 1527.6,440.60 1513.1,432.21 1498.6,423.82 1498.4,424.25 1512.8,432.64 1527.3,441.03 1541.8,449.42 1556.3,457.81 1570.8,466.20 1585.3,474.59 1599.8,482.98"/><polygon points="1600.1,478.87 1586.4,471.06 1572.7,463.26 1558.9,455.46 1545.2,447.65 1531.5,439.85 1517.8,432.05 1504.1,424.25 1503.9,424.68 1517.6,432.48 1531.3,440.29 1545.0,448.09 1558.7,455.89 1572.4,463.70 1586.1,471.50 1599.8,479.30"/><polygon points="1600.1,475.31 1587.1,468.07 1574.2,460.84 1561.3,453.61 1548.4,446.37 1535.5,439.14 1522.6,431.91 1509.6,424.68 1509.4,425.11 1522.3,432.34 1535.2,439.58 1548.1,446.81 1561.1,454.04 1574.0,461.28 1586.9,468.51 1599.8,475.74"/><polygon points="1600.0,471.86 1587.9,465.18 1575.8,458.50 1563.7,451.82 1551.6,445.14 1539.4,438.47 1527.3,431.79 1515.2,425.11 1515.0,425.55 1527.1,432.22 1539.2,438.90 1551.3,445.58 1563.4,452.26 1575.6,458.94 1587.7,465.62 1599.8,472.30"/><polygon points="1600.0,468.52 1588.7,462.38 1577.4,456.24 1566.1,450.10 1554.7,443.96 1543.4,437.82 1532.1,431.68 1520.8,425.54 1520.5,425.98 1531.9,432.12 1543.2,438.26 1554.5,444.40 1565.8,450.54 1577.2,456.68 1588.5,462.82 1599.8,468.96"/><polygon points="1600.0,465.29 1589.5,459.67 1579.0,454.06 1568.5,448.44 1558.0,442.83 1547.4,437.21 1536.9,431.60 1526.4,425.98 1526.2,426.42 1536.7,432.04 1547.2,437.65 1557.7,443.27 1568.2,448.88 1578.8,454.50 1589.3,460.11 1599.8,465.73"/><polygon points="1600.0,462.15 1590.3,457.04 1580.6,451.94 1570.9,446.84 1561.2,441.73 1551.5,436.63 1541.8,431.52 1532.1,426.42 1531.8,426.86 1541.5,431.97 1551.2,437.07 1560.9,442.18 1570.7,447.28 1580.4,452.38 1590.1,457.49 1599.8,462.59"/><polygon points="1600.0,456.15 1591.9,452.03 1583.8,447.91 1575.8,443.79 1567.7,439.67 1559.6,435.55 1551.5,431.43 1543.4,427.31 1543.2,427.75 1551.3,431.87 1559.4,435.99 1567.4,440.12 1575.5,444.24 1583.6,448.36 1591.7,452.48 1599.8,456.60"/><polygon points="1600.1,453.36 1592.8,449.70 1585.6,446.04 1578.3,442.39 1571.0,438.73 1563.7,435.07 1556.5,431.41 1549.2,427.75 1549.0,428.20 1556.2,431.86 1563.5,435.52 1570.8,439.17 1578.1,442.83 1585.3,446.49 1592.6,450.15 1599.9,453.81"/><polygon points="1600.1,450.57 1593.6,447.38 1587.2,444.18 1580.8,440.99 1574.3,437.79 1567.9,434.60 1561.4,431.40 1555.0,428.20 1554.7,428.65 1561.2,431.85 1567.6,435.04 1574.1,438.24 1580.5,441.43 1587.0,444.63 1593.4,447.83 1599.9,451.02"/><polygon points="1600.1,447.87 1594.5,445.12 1588.8,442.38 1583.2,439.63 1577.6,436.89 1572.0,434.14 1566.4,431.40 1560.8,428.65 1560.5,429.10 1566.2,431.85 1571.8,434.59 1577.4,437.34 1583.0,440.08 1588.6,442.83 1594.2,445.57 1599.9,448.32"/><polygon points="1600.1,445.24 1595.3,442.93 1590.5,440.63 1585.7,438.33 1580.9,436.02 1576.2,433.72 1571.4,431.41 1566.6,429.11 1566.4,429.56 1571.2,431.86 1575.9,434.17 1580.7,436.47 1585.5,438.78 1590.3,441.08 1595.1,443.38 1599.9,445.69"/><polygon points="1600.1,442.68 1596.1,440.81 1592.2,438.93 1588.2,437.06 1584.3,435.19 1580.3,433.31 1576.4,431.44 1572.5,429.57 1572.2,430.02 1576.2,431.89 1580.1,433.76 1584.1,435.64 1588.0,437.51 1592.0,439.38 1595.9,441.26 1599.8,443.13"/><polygon points="1600.0,440.19 1596.9,438.74 1593.8,437.29 1590.7,435.83 1587.6,434.38 1584.6,432.93 1581.5,431.48 1578.4,430.02 1578.1,430.48 1581.2,431.93 1584.3,433.38 1587.4,434.83 1590.5,436.29 1593.6,437.74 1596.7,439.19 1599.8,440.64"/><polygon points="1600.0,437.77 1597.8,436.73 1595.5,435.69 1593.3,434.65 1591.0,433.61 1588.8,432.57 1586.5,431.53 1584.3,430.49 1584.1,430.94 1586.3,431.98 1588.6,433.02 1590.8,434.06 1593.1,435.10 1595.3,436.14 1597.6,437.18 1599.8,438.22"/><polygon points="1600.0,435.41 1598.6,434.77 1597.2,434.14 1595.8,433.50 1594.4,432.86 1593.0,432.23 1591.6,431.59 1590.2,430.95 1590.0,431.41 1591.4,432.04 1592.8,432.68 1594.2,433.32 1595.6,433.95 1597.0,434.59 1598.4,435.23 1599.8,435.87"/><polygon points="-300.1,659.03 -293.4,667.74 -286.7,676.44 -280.1,685.14 -273.4,693.84 -266.7,702.55 -260.0,711.25 -253.3,719.95 -252.9,719.65 -259.6,710.94 -266.3,702.24 -273.0,693.54 -279.7,684.84 -286.3,676.14 -293.0,667.43 -299.7,658.73"/><polygon points="-300.2,631.05 -289.7,643.78 -279.2,656.50 -268.7,669.22 -258.2,681.95 -247.7,694.67 -237.2,707.40 -226.7,720.12 -226.3,719.80 -236.8,707.08 -247.3,694.35 -257.8,681.63 -268.3,668.91 -278.8,656.18 -289.3,643.46 -299.8,630.74"/><polygon points="-286.8,621.94 -274.4,635.96 -262.0,649.98 -249.7,664.00 -237.3,678.02 -224.9,692.04 -212.5,706.06 -200.2,720.08 -199.8,719.75 -212.2,705.73 -224.5,691.71 -236.9,677.69 -249.3,663.67 -261.7,649.65 -274.0,635.63 -286.4,621.61"/><polygon points="-269.8,617.85 -256.0,632.45 -242.3,647.05 -228.6,661.65 -214.8,676.25 -201.1,690.85 -187.4,705.45 -173.6,720.05 -173.3,719.70 -187.0,705.10 -200.7,690.50 -214.5,675.90 -228.2,661.30 -241.9,646.70 -255.7,632.10 -269.4,617.50"/><polygon points="-253.1,613.84 -238.0,629.01 -222.8,644.18 -207.7,659.34 -192.6,674.51 -177.4,689.68 -162.3,704.84 -147.1,720.01 -146.8,719.66 -161.9,704.49 -177.1,689.32 -192.2,674.16 -207.4,658.99 -222.5,643.82 -237.6,628.66 -252.8,613.49"/><polygon points="-236.8,609.93 -220.2,625.68 -203.6,641.43 -187.0,657.18 -170.3,672.93 -153.7,688.68 -137.1,704.43 -120.4,720.18 -120.1,719.81 -136.7,704.06 -153.3,688.31 -170.0,672.56 -186.6,656.81 -203.2,641.06 -219.9,625.31 -236.5,609.56"/><polygon points="-220.9,606.10 -202.8,622.39 -184.6,638.68 -166.5,654.97 -148.4,671.26 -130.2,687.56 -112.1,703.85 -93.9,720.14 -93.6,719.77 -111.7,703.48 -129.9,687.18 -148.0,670.89 -166.2,654.60 -184.3,638.31 -202.5,622.02 -220.6,605.73"/><polygon points="-205.4,602.35 -185.7,619.17 -165.9,635.99 -146.2,652.82 -126.5,669.64 -106.8,686.46 -87.1,703.28 -67.4,720.10 -67.1,719.72 -86.8,702.90 -106.5,686.08 -126.2,669.26 -145.9,652.43 -165.6,635.61 -185.3,618.79 -205.0,601.97"/><polygon points="-190.1,598.68 -168.8,616.02 -147.5,633.36 -126.2,650.70 -104.9,668.04 -83.6,685.38 -62.2,702.72 -40.9,720.06 -40.6,719.68 -61.9,702.34 -83.2,685.00 -104.5,667.66 -125.9,650.32 -147.2,632.98 -168.5,615.64 -189.8,598.30"/><polygon points="-160.6,591.58 -135.9,609.95 -111.2,628.33 -86.5,646.70 -61.8,665.07 -37.1,683.44 -12.4,701.82 12.3,720.19 12.6,719.79 -12.1,701.41 -36.8,683.04 -61.5,664.67 -86.2,646.30 -110.9,627.92 -135.6,609.55 -160.3,591.18"/><polygon points="-146.3,588.14 -119.9,607.00 -93.4,625.86 -67.0,644.71 -40.5,663.57 -14.1,682.43 12.4,701.29 38.8,720.15 39.1,719.74 12.7,700.88 -13.8,682.03 -40.2,663.17 -66.7,644.31 -93.1,625.45 -119.6,606.59 -146.0,587.73"/><polygon points="-132.3,584.77 -104.1,604.10 -75.8,623.44 -47.6,642.77 -19.4,662.11 8.8,681.44 37.1,700.78 65.3,720.11 65.6,719.70 37.4,700.36 9.1,681.03 -19.1,661.69 -47.3,642.36 -75.6,623.03 -103.8,603.69 -132.0,584.36"/><polygon points="-118.6,581.47 -88.5,601.27 -58.5,621.07 -28.4,640.87 1.6,660.67 31.7,680.47 61.7,700.27 91.8,720.07 92.1,719.65 62.0,699.85 32.0,680.05 1.9,660.25 -28.1,640.45 -58.2,620.65 -88.2,600.85 -118.3,581.05"/><polygon points="-105.1,578.23 -73.2,598.49 -41.3,618.75 -9.4,639.00 22.5,659.26 54.4,679.52 86.4,699.77 118.3,720.03 118.5,719.61 86.6,699.35 54.7,679.10 22.8,658.84 -9.1,638.58 -41.0,618.32 -72.9,598.07 -104.9,577.81"/><polygon points="-92.0,575.06 -58.1,595.79 -24.2,616.53 9.6,637.26 43.5,657.99 77.3,678.73 111.2,699.46 145.1,720.19 145.3,719.77 111.5,699.03 77.6,678.30 43.8,657.57 9.9,636.83 -24.0,616.10 -57.8,595.37 -91.7,574.63"/><polygon points="-79.0,571.95 -43.2,593.12 -7.4,614.29 28.4,635.47 64.2,656.64 100.0,677.81 135.8,698.98 171.5,720.15 171.8,719.72 136.0,698.55 100.2,677.38 64.4,656.21 28.6,635.04 -7.2,613.86 -43.0,592.69 -78.8,571.52"/><polygon points="-66.4,568.90 -28.6,590.50 9.2,612.11 46.9,633.71 84.7,655.31 122.5,676.91 160.3,698.51 198.0,720.11 198.3,719.68 160.5,698.08 122.7,676.48 85.0,654.88 47.2,633.27 9.4,611.67 -28.4,590.07 -66.1,568.47"/><polygon points="-54.0,565.91 -14.2,587.94 25.6,609.96 65.4,631.98 105.2,654.01 144.9,676.03 184.7,698.05 224.5,720.07 224.7,719.64 185.0,697.61 145.2,675.59 105.4,653.57 65.6,631.55 25.8,609.52 -13.9,587.50 -53.7,565.48"/><polygon points="-29.8,560.11 14.1,582.98 58.1,605.85 102.0,628.72 146.0,651.59 189.9,674.46 233.9,697.33 277.8,720.20 278.0,719.75 234.1,696.88 190.1,674.01 146.2,651.14 102.2,628.27 58.3,605.40 14.3,582.53 -29.6,559.66"/><polygon points="-18.1,557.28 27.9,580.55 74.0,603.82 120.1,627.09 166.1,650.35 212.2,673.62 258.2,696.89 304.3,720.16 304.5,719.71 258.4,696.44 212.4,673.17 166.3,649.91 120.3,626.64 74.2,603.37 28.2,580.11 -17.9,556.84"/><polygon points="-6.6,554.51 41.6,578.17 89.8,601.83 138.0,625.49 186.2,649.14 234.4,672.80 282.5,696.46 330.7,720.12 331.0,719.67 282.8,696.01 234.6,672.35 186.4,648.69 138.2,625.04 90.0,601.38 41.8,577.72 -6.4,554.07"/><polygon points="4.7,551.80 55.0,575.84 105.4,599.88 155.8,623.92 206.1,647.96 256.5,672.00 306.8,696.04 357.2,720.08 357.4,719.62 307.1,695.58 256.7,671.54 206.3,647.50 156.0,623.46 105.6,599.42 55.3,575.38 4.9,551.35"/><polygon points="15.8,549.13 68.3,573.54 120.9,597.96 173.4,622.37 226.0,646.79 278.5,671.20 331.1,695.62 383.6,720.03 383.9,719.58 331.3,695.17 278.7,670.75 226.2,646.34 173.6,621.92 121.1,597.50 68.5,573.09 16.0,548.67"/><polygon points="26.6,546.51 81.5,571.32 136.3,596.13 191.2,620.95 246.0,645.76 300.9,670.57 355.7,695.38 410.5,720.20 410.7,719.74 355.9,694.93 301.1,670.11 246.2,645.30 191.4,620.49 136.5,595.68 81.7,570.86 26.9,546.05"/><polygon points="37.3,543.93 94.4,569.11 151.5,594.28 208.6,619.46 265.7,644.63 322.8,669.81 379.9,694.98 437.0,720.15 437.2,719.70 380.1,694.52 323.0,669.35 265.9,644.17 208.8,619.00 151.7,593.83 94.6,568.65 37.5,543.48"/><polygon points="47.8,541.41 107.2,566.94 166.6,592.47 225.9,618.00 285.3,643.53 344.7,669.05 404.1,694.58 463.4,720.11 463.6,719.65 404.3,694.13 344.9,668.60 285.5,643.07 226.1,617.54 166.8,592.01 107.4,566.48 48.0,540.95"/><polygon points="58.1,538.92 119.8,564.80 181.5,590.68 243.2,616.56 304.9,642.44 366.5,668.32 428.2,694.19 489.9,720.07 490.1,719.61 428.4,693.73 366.7,667.86 305.0,641.98 243.4,616.10 181.7,590.22 120.0,564.34 58.3,538.46"/><polygon points="78.2,534.09 144.7,560.67 211.1,587.26 277.5,613.85 344.0,640.43 410.4,667.02 476.8,693.61 543.3,720.19 543.5,719.73 477.0,693.14 410.6,666.56 344.1,639.97 277.7,613.38 211.3,586.80 144.8,560.21 78.4,533.62"/><polygon points="88.0,531.73 156.8,558.65 225.6,585.57 294.4,612.48 363.3,639.40 432.1,666.32 500.9,693.24 569.7,720.15 569.9,719.69 501.1,692.77 432.3,665.85 363.4,638.94 294.6,612.02 225.8,585.10 157.0,558.18 88.2,531.27"/><polygon points="97.6,529.42 168.8,556.66 240.1,583.90 311.3,611.14 382.5,638.39 453.7,665.63 524.9,692.87 596.1,720.11 596.3,719.64 525.1,692.40 453.9,665.16 382.7,637.92 311.5,610.68 240.2,583.43 169.0,556.19 97.8,528.95"/><polygon points="107.1,527.14 180.7,554.70 254.4,582.26 328.0,609.82 401.6,637.39 475.3,664.95 548.9,692.51 622.6,720.07 622.7,719.60 549.1,692.04 475.5,664.48 401.8,636.92 328.2,609.36 254.5,581.79 180.9,554.23 107.2,526.67"/><polygon points="116.4,524.90 192.5,552.81 268.7,580.71 344.9,608.61 421.0,636.52 497.2,664.42 573.4,692.33 649.6,720.23 649.7,719.76 573.6,691.86 497.4,663.95 421.2,636.05 345.0,608.15 268.9,580.24 192.7,552.34 116.5,524.43"/><polygon points="125.5,522.70 204.1,550.91 282.8,579.13 361.4,607.34 440.1,635.55 518.7,663.76 597.3,691.98 676.0,720.19 676.2,719.72 597.5,691.51 518.9,663.29 440.2,635.08 361.6,606.87 283.0,578.66 204.3,550.44 125.7,522.23"/><polygon points="134.5,520.54 215.6,549.05 296.8,577.57 377.9,606.08 459.0,634.60 540.2,663.12 621.3,691.63 702.4,720.15 702.6,719.68 621.4,691.16 540.3,662.64 459.2,634.13 378.1,605.61 296.9,577.10 215.8,548.58 134.7,520.06"/><polygon points="143.3,518.41 227.0,547.22 310.6,576.04 394.3,604.85 477.9,633.66 561.6,662.48 645.2,691.29 728.8,720.11 729.0,719.63 645.4,690.82 561.7,662.01 478.1,633.19 394.4,604.38 310.8,575.56 227.1,546.75 143.5,517.93"/><polygon points="152.0,516.31 238.2,545.42 324.4,574.53 410.6,603.64 496.7,632.74 582.9,661.85 669.1,690.96 755.3,720.07 755.4,719.59 669.2,690.48 583.1,661.38 496.9,632.27 410.7,603.16 324.5,574.05 238.4,544.95 152.2,515.84"/><polygon points="169.0,512.22 260.4,541.93 351.8,571.64 443.2,601.35 534.6,631.06 625.9,660.77 717.3,690.48 808.7,720.19 808.9,719.71 717.5,690.00 626.1,660.29 534.7,630.58 443.3,600.87 351.9,571.17 260.6,541.46 169.2,511.75"/><polygon points="177.3,510.23 271.3,540.22 365.3,570.20 459.2,600.19 553.2,630.18 647.2,660.17 741.1,690.16 835.1,720.14 835.3,719.67 741.3,689.68 647.3,659.69 553.3,629.70 459.4,599.72 365.4,569.73 271.4,539.74 177.5,509.75"/><polygon points="185.5,508.26 282.0,538.53 378.6,568.79 475.2,599.05 571.8,629.31 668.4,659.58 764.9,689.84 861.5,720.10 861.7,719.63 765.1,689.36 668.5,659.10 571.9,628.84 475.4,598.57 378.8,568.31 282.2,538.05 185.6,507.79"/><polygon points="193.5,506.33 292.7,536.86 391.9,567.39 491.1,597.93 590.3,628.46 689.5,659.00 788.7,689.53 887.9,720.06 888.1,719.58 788.9,689.05 689.7,658.52 590.5,627.98 491.3,597.45 392.1,566.92 292.8,536.38 193.6,505.85"/><polygon points="201.4,504.42 303.3,535.25 405.3,566.08 507.2,596.91 609.2,627.74 711.1,658.57 813.1,689.39 915.0,720.22 915.1,719.74 813.2,688.92 711.3,658.09 609.3,627.26 507.4,596.43 405.4,565.60 303.5,534.77 201.5,503.95"/><polygon points="209.2,502.55 313.8,533.64 418.4,564.73 523.0,595.82 627.6,626.91 732.2,658.00 836.8,689.09 941.4,720.18 941.6,719.70 836.9,688.61 732.3,657.52 627.7,626.43 523.1,595.34 418.5,564.25 313.9,533.16 209.3,502.07"/><polygon points="216.8,500.70 324.1,532.05 431.4,563.40 538.7,594.75 646.0,626.10 753.3,657.44 860.5,688.79 967.8,720.14 968.0,719.66 860.7,688.31 753.4,656.96 646.1,625.62 538.8,594.27 431.6,562.92 324.3,531.57 217.0,500.22"/><polygon points="224.4,498.88 334.4,530.49 444.3,562.09 554.3,593.69 664.3,625.29 774.3,656.89 884.2,688.50 994.2,720.10 994.4,719.62 884.4,688.02 774.4,656.41 664.4,624.81 554.5,593.21 444.5,561.61 334.5,530.01 224.5,498.40"/><polygon points="231.8,497.09 344.5,528.95 457.2,560.80 569.9,592.65 682.6,624.50 795.2,656.35 907.9,688.20 1020.6,720.06 1020.7,719.58 908.1,687.72 795.4,655.87 682.7,624.02 570.0,592.17 457.3,560.32 344.7,528.46 232.0,496.61"/><polygon points="246.4,493.59 364.6,525.96 482.9,558.33 601.1,590.70 719.4,623.07 837.6,655.44 955.9,687.81 1074.1,720.18 1074.2,719.69 956.0,687.32 837.8,654.95 719.5,622.59 601.3,590.22 483.0,557.85 364.8,525.48 246.5,493.11"/><polygon points="253.5,491.88 374.5,524.49 495.5,557.09 616.5,589.70 737.5,622.31 858.5,654.92 979.5,687.53 1100.5,720.13 1100.6,719.65 979.6,687.04 858.6,654.44 737.6,621.83 616.6,589.22 495.6,556.61 374.6,524.00 253.6,491.39"/><polygon points="260.5,490.19 384.3,523.03 508.0,555.88 631.8,588.72 755.6,621.56 879.4,654.41 1003.1,687.25 1126.9,720.09 1127.0,719.61 1003.2,686.77 879.5,653.92 755.7,621.08 631.9,588.24 508.2,555.39 384.4,522.55 260.6,489.71"/><polygon points="267.4,488.53 394.0,521.60 520.5,554.68 647.1,587.75 773.6,620.83 900.2,653.90 1026.7,686.98 1153.3,720.05 1153.4,719.57 1026.8,686.49 900.3,653.42 773.7,620.34 647.2,587.27 520.6,554.19 394.1,521.12 267.5,488.04"/><polygon points="274.2,486.89 403.7,520.22 533.1,553.55 662.6,586.88 792.1,620.22 921.5,653.55 1051.0,686.88 1180.4,720.21 1180.6,719.73 1051.1,686.40 921.6,653.06 792.2,619.73 662.7,586.40 533.3,553.07 403.8,519.73 274.3,486.40"/><polygon points="280.9,485.27 413.2,518.83 545.5,552.38 677.7,585.94 810.0,619.50 942.3,653.06 1074.5,686.61 1206.8,720.17 1206.9,719.69 1074.7,686.13 942.4,652.57 810.1,619.01 677.9,585.46 545.6,551.90 413.3,518.34 281.0,484.79"/><polygon points="287.5,483.68 422.6,517.46 557.7,551.23 692.8,585.01 827.9,618.79 963.0,652.57 1098.1,686.35 1233.2,720.13 1233.3,719.64 1098.2,685.87 963.1,652.09 828.0,618.31 692.9,584.53 557.8,550.75 422.8,516.97 287.7,483.19"/><polygon points="294.1,482.11 432.0,516.10 569.9,550.10 707.8,584.10 845.8,618.10 983.7,652.09 1121.6,686.09 1259.6,720.09 1259.7,719.60 1121.8,685.60 983.8,651.61 845.9,617.61 708.0,583.61 570.0,549.62 432.1,515.62 294.2,481.62"/><polygon points="300.5,480.56 441.3,514.77 582.0,548.98 722.8,583.20 863.6,617.41 1004.4,651.62 1145.2,685.83 1285.9,720.05 1286.1,719.56 1145.3,685.35 1004.5,651.13 863.7,616.92 722.9,582.71 582.2,548.50 441.4,514.28 300.6,480.07"/><polygon points="313.1,477.52 459.7,512.19 606.4,546.85 753.0,581.51 899.6,616.18 1046.2,650.84 1192.9,685.50 1339.5,720.16 1339.6,719.68 1193.0,685.02 1046.4,650.35 899.7,615.69 753.1,581.03 606.5,546.36 459.8,511.70 313.2,477.04"/><polygon points="319.3,476.04 468.8,510.91 618.3,545.78 767.8,580.65 917.3,615.52 1066.8,650.38 1216.4,685.25 1365.9,720.12 1366.0,719.64 1216.5,684.77 1067.0,649.90 917.4,615.03 767.9,580.16 618.4,545.29 468.9,510.42 319.4,475.55"/><polygon points="325.3,474.57 477.8,509.64 630.2,544.72 782.6,579.79 935.0,614.86 1087.4,649.94 1239.8,685.01 1392.2,720.08 1392.4,719.59 1239.9,684.52 1087.5,649.45 935.1,614.38 782.7,579.30 630.3,544.23 477.9,509.16 325.5,474.08"/><polygon points="331.3,473.13 486.8,508.43 642.2,543.73 797.7,579.03 953.1,614.34 1108.6,649.64 1264.0,684.94 1419.5,720.24 1419.6,719.75 1264.1,684.45 1108.7,649.15 953.2,613.85 797.8,578.55 642.4,543.24 486.9,507.94 331.5,472.64"/><polygon points="337.3,471.70 495.6,507.20 654.0,542.70 812.4,578.20 970.7,613.70 1129.1,649.20 1287.5,684.70 1445.8,720.20 1446.0,719.71 1287.6,684.21 1129.2,648.71 970.8,613.21 812.5,577.71 654.1,542.21 495.7,506.71 337.4,471.21"/><polygon points="343.1,470.29 504.4,505.99 665.7,541.68 827.0,577.38 988.3,613.07 1149.6,648.77 1310.9,684.46 1472.2,720.16 1472.3,719.67 1311.0,683.98 1149.7,648.28 988.4,612.58 827.1,576.89 665.8,541.19 504.5,505.50 343.2,469.80"/><polygon points="348.9,468.90 513.1,504.79 677.4,540.68 841.6,576.57 1005.8,612.45 1170.1,648.34 1334.3,684.23 1498.6,720.12 1498.7,719.63 1334.4,683.74 1170.2,647.85 1005.9,611.97 841.7,576.08 677.5,540.19 513.2,504.30 349.0,468.41"/><polygon points="354.6,467.53 521.8,503.61 688.9,539.69 856.1,575.77 1023.3,611.84 1190.5,647.92 1357.7,684.00 1524.9,720.08 1525.0,719.59 1357.8,683.51 1190.6,647.43 1023.4,611.35 856.2,575.28 689.1,539.20 521.9,503.12 354.7,467.04"/><polygon points="360.2,466.18 530.5,502.47 700.8,538.77 871.0,575.06 1041.3,611.35 1211.6,647.65 1381.9,683.94 1552.2,720.24 1552.3,719.75 1382.0,683.45 1211.7,647.16 1041.4,610.87 871.1,574.57 700.9,538.28 530.6,501.98 360.3,465.69"/><polygon points="371.2,463.53 546.6,500.01 722.0,536.50 897.4,572.99 1072.8,609.48 1248.3,645.97 1423.7,682.46 1599.1,718.94 1599.2,718.46 1423.8,681.97 1248.4,645.48 1072.9,608.99 897.5,572.50 722.1,536.01 546.7,499.53 371.3,463.04"/><polygon points="376.6,462.23 551.3,498.13 725.9,534.03 900.6,569.93 1075.3,605.84 1250.0,641.74 1424.6,677.64 1599.3,713.55 1599.4,713.06 1424.7,677.15 1250.1,641.25 1075.4,605.35 900.7,569.44 726.0,533.54 551.4,497.64 376.7,461.74"/><polygon points="381.9,460.94 555.9,496.27 729.8,531.61 903.7,566.94 1077.7,602.27 1251.6,637.61 1425.6,672.94 1599.5,708.27 1599.6,707.78 1425.7,672.45 1251.7,637.12 1077.8,601.78 903.8,566.45 729.9,531.12 556.0,495.78 382.0,460.45"/><polygon points="387.2,459.67 560.4,494.45 733.6,529.23 906.8,564.01 1080.1,598.78 1253.3,633.56 1426.5,668.34 1599.7,703.12 1599.8,702.63 1426.6,667.85 1253.4,633.07 1080.1,598.30 906.9,563.52 733.7,528.74 560.5,493.96 387.3,459.18"/><polygon points="392.4,458.42 564.9,492.66 737.4,526.90 909.9,561.13 1082.4,595.36 1254.9,629.61 1427.4,663.85 1599.9,698.08 1600.0,697.59 1427.5,663.36 1255.0,629.12 1082.5,594.89 910.0,560.64 737.5,526.40 565.0,492.17 392.5,457.93"/><polygon points="397.5,457.18 569.2,490.87 740.9,524.55 912.5,558.24 1084.2,591.91 1255.8,625.61 1427.5,659.30 1599.2,692.98 1599.3,692.49 1427.6,658.81 1255.9,625.12 1084.3,591.45 912.6,557.75 740.9,524.06 569.3,490.38 397.6,456.69"/><polygon points="402.6,455.96 573.6,489.13 744.5,522.31 915.5,555.48 1086.5,588.64 1257.4,621.83 1428.4,655.00 1599.4,688.18 1599.4,687.68 1428.5,654.51 1257.5,621.34 1086.6,588.18 915.6,554.99 744.6,521.82 573.7,488.64 402.7,455.47"/><polygon points="407.6,454.75 577.9,487.43 748.2,520.10 918.4,552.77 1088.7,585.43 1259.0,618.12 1429.3,650.80 1599.5,683.47 1599.6,682.98 1429.4,650.31 1259.1,617.63 1088.8,584.98 918.5,552.29 748.3,519.61 578.0,486.94 407.7,454.26"/><polygon points="412.6,453.56 582.2,485.75 751.7,517.94 921.3,550.11 1090.9,582.28 1260.5,614.50 1430.1,646.69 1599.7,678.87 1599.8,678.38 1430.2,646.19 1260.6,614.01 1091.0,581.85 921.4,549.65 751.8,517.45 582.2,485.26 412.7,453.07"/><polygon points="422.3,451.22 590.4,482.45 758.5,513.68 926.7,544.88 1094.8,576.09 1263.0,607.34 1431.1,638.58 1599.2,669.80 1599.3,669.31 1431.2,638.09 1263.0,606.87 1094.9,575.67 926.8,544.43 758.6,513.18 590.5,481.96 422.4,450.73"/><polygon points="427.0,450.07 594.5,480.85 762.0,511.62 929.5,542.37 1097.0,573.13 1264.4,603.93 1431.9,634.72 1599.4,665.50 1599.5,665.00 1432.0,634.23 1264.5,603.47 1097.0,572.72 929.6,541.93 762.1,511.13 594.6,480.36 427.1,449.58"/><polygon points="431.8,448.94 598.6,479.27 765.4,509.61 932.3,539.91 1099.1,570.23 1265.9,600.59 1432.8,630.94 1599.6,661.28 1599.7,660.78 1432.8,630.45 1266.0,600.13 1099.2,569.83 932.3,539.48 765.5,509.11 598.7,478.78 431.8,448.45"/><polygon points="436.4,447.82 602.6,477.72 768.8,507.62 935.0,537.50 1101.2,567.38 1267.4,597.31 1433.6,627.24 1599.8,657.14 1599.8,656.65 1433.7,626.75 1267.5,596.86 1101.3,566.99 935.1,537.07 768.9,507.13 602.7,477.23 436.5,447.33"/><polygon points="441.0,446.71 606.6,476.19 772.1,505.67 937.7,535.12 1103.3,564.59 1268.8,594.10 1434.4,623.61 1599.9,653.09 1600.0,652.60 1434.5,623.12 1268.9,593.66 1103.3,564.20 937.8,534.70 772.2,505.19 606.7,475.70 441.1,446.22"/><polygon points="445.6,445.61 610.4,474.67 775.2,503.71 940.0,532.73 1104.8,561.77 1269.7,590.85 1434.5,619.93 1599.3,648.98 1599.4,648.49 1434.6,619.44 1269.7,590.41 1104.9,561.39 940.1,532.32 775.3,503.23 610.5,474.17 445.6,445.12"/><polygon points="450.1,444.53 614.3,473.18 778.5,501.82 942.7,530.44 1106.9,559.08 1271.1,587.76 1435.3,616.45 1599.5,645.10 1599.5,644.61 1435.3,615.95 1271.1,587.33 1106.9,558.71 942.7,530.04 778.5,501.35 614.3,472.69 450.1,444.04"/><polygon points="454.5,443.46 618.1,471.72 781.7,499.97 945.3,528.20 1108.9,556.44 1272.5,584.73 1436.0,613.03 1599.6,641.29 1599.7,640.80 1436.1,612.54 1272.5,584.31 1108.9,556.08 945.3,527.80 781.8,499.51 618.2,471.23 454.6,442.97"/><polygon points="458.9,442.40 621.9,470.28 784.9,498.14 947.9,525.99 1110.8,553.85 1273.8,581.76 1436.8,609.68 1599.8,637.56 1599.9,637.06 1436.9,609.18 1273.9,581.35 1110.9,553.49 947.9,525.60 784.9,497.69 622.0,469.79 459.0,441.91"/><polygon points="467.5,440.32 629.2,467.45 790.9,494.54 952.6,521.63 1114.3,548.74 1276.0,575.88 1437.6,603.05 1599.3,630.17 1599.4,629.68 1437.7,602.56 1276.0,575.49 1114.3,548.39 952.7,521.25 791.0,494.10 629.3,466.95 467.6,439.83"/><polygon points="471.8,439.30 632.9,466.07 794.0,492.80 955.1,519.54 1116.2,546.28 1277.3,573.07 1438.4,599.89 1599.5,626.66 1599.6,626.16 1438.5,599.40 1277.4,572.68 1116.3,545.95 955.1,519.16 794.0,492.37 632.9,465.57 471.8,438.81"/><polygon points="476.0,438.29 636.5,464.71 797.0,491.09 957.6,517.48 1118.1,543.87 1278.6,570.32 1439.1,596.79 1599.7,623.20 1599.7,622.71 1439.2,596.29 1278.7,569.93 1118.1,543.54 957.6,517.11 797.1,490.66 636.6,464.22 476.0,437.80"/><polygon points="480.1,437.29 640.1,463.36 800.0,489.41 960.0,515.45 1120.0,541.51 1279.9,567.61 1439.9,593.74 1599.8,619.81 1599.9,619.32 1439.9,593.25 1280.0,567.23 1120.0,541.18 960.0,515.09 800.1,488.98 640.1,462.88 480.2,436.80"/><polygon points="484.2,436.31 643.5,462.02 802.8,487.71 962.1,513.40 1121.4,539.11 1280.7,564.86 1439.9,590.64 1599.2,616.37 1599.3,615.87 1440.0,590.15 1280.7,564.49 1121.4,538.79 962.1,513.05 802.9,487.29 643.6,461.54 484.3,435.81"/><polygon points="488.3,435.33 647.0,460.71 805.7,486.08 964.5,511.45 1123.2,536.82 1281.9,562.25 1440.7,587.71 1599.4,613.10 1599.5,612.61 1440.7,587.21 1282.0,561.88 1123.2,536.51 964.5,511.10 805.8,485.67 647.1,460.24 488.3,434.83"/><polygon points="492.3,434.36 650.4,459.43 808.6,484.47 966.8,509.52 1125.0,534.58 1283.2,559.68 1441.4,584.82 1599.5,609.90 1599.6,609.41 1441.4,584.33 1283.2,559.32 1125.1,534.27 966.9,509.17 808.7,484.07 650.5,458.96 492.3,433.87"/><polygon points="496.2,433.41 653.9,458.15 811.5,482.89 969.2,507.62 1126.8,532.37 1284.4,557.16 1442.1,581.99 1599.7,606.75 1599.8,606.26 1442.1,581.50 1284.5,556.80 1126.8,532.06 969.2,507.28 811.6,482.49 653.9,457.69 496.3,432.91"/><polygon points="500.2,432.46 657.3,456.90 814.4,481.33 971.5,505.75 1128.6,530.19 1285.7,554.68 1442.7,579.20 1599.8,603.66 1599.9,603.17 1442.8,578.71 1285.7,554.33 1128.6,529.89 971.5,505.42 814.4,480.93 657.3,456.44 500.2,431.97"/><polygon points="507.9,430.60 663.8,454.43 819.8,478.24 975.7,502.06 1131.6,525.89 1287.6,549.76 1443.5,573.68 1599.4,597.54 1599.5,597.04 1443.6,573.20 1287.6,549.43 1131.7,525.60 975.7,501.74 819.8,477.86 663.9,453.98 507.9,430.11"/><polygon points="511.7,429.68 667.1,453.22 822.5,476.75 977.9,500.28 1133.3,523.82 1288.8,547.41 1444.2,571.04 1599.6,594.61 1599.7,594.11 1444.2,570.57 1288.8,547.07 1133.4,523.54 978.0,499.96 822.6,476.37 667.2,452.78 511.7,429.20"/><polygon points="515.4,428.77 670.3,452.03 825.2,475.28 980.1,498.53 1135.0,521.79 1289.9,545.09 1444.8,568.44 1599.7,591.73 1599.8,591.24 1444.9,567.97 1290.0,544.76 1135.1,521.51 980.2,498.21 825.3,474.90 670.4,451.60 515.5,428.30"/><polygon points="519.1,427.87 673.5,450.86 827.9,473.83 982.3,496.80 1136.7,519.79 1291.1,542.81 1445.5,565.88 1599.9,588.90 1599.9,588.41 1445.5,565.42 1291.1,542.49 1136.8,519.51 982.4,496.49 828.0,473.46 673.6,450.43 519.2,427.40"/><polygon points="522.8,426.99 676.6,449.68 830.4,472.37 984.2,495.06 1138.0,517.76 1291.8,540.50 1445.5,563.28 1599.3,586.02 1599.4,585.53 1445.6,562.83 1291.8,540.18 1138.0,517.49 984.2,494.75 830.5,472.01 676.7,449.26 522.9,426.52"/><polygon points="526.5,426.11 679.8,448.54 833.0,470.96 986.3,493.38 1139.6,515.82 1292.9,538.29 1446.2,560.81 1599.5,583.29 1599.5,582.79 1446.2,560.36 1293.0,537.98 1139.7,515.55 986.4,493.08 833.1,470.60 679.8,448.12 526.5,425.65"/><polygon points="530.1,425.24 682.9,447.41 835.7,469.57 988.5,491.73 1141.2,513.91 1294.0,536.12 1446.8,558.38 1599.6,580.60 1599.7,580.11 1446.9,557.94 1294.1,535.81 1141.3,513.65 988.5,491.44 835.7,469.22 682.9,446.99 530.1,424.78"/><polygon points="533.6,424.38 685.9,446.29 838.2,468.20 990.6,490.11 1142.9,512.03 1295.2,533.99 1447.5,555.99 1599.7,577.96 1599.8,577.46 1447.5,555.55 1295.2,533.68 1142.9,511.77 990.6,489.82 838.3,467.85 686.0,445.88 533.7,423.93"/><polygon points="537.2,423.52 689.0,445.19 840.8,466.85 992.6,488.51 1144.4,510.18 1296.3,531.89 1448.1,553.64 1599.9,575.36 1600.0,574.86 1448.1,553.21 1296.3,531.59 1144.5,509.92 992.7,488.22 840.9,466.50 689.0,444.79 537.2,423.08"/><polygon points="544.1,421.85 694.9,443.01 845.7,464.17 996.4,485.33 1147.2,506.50 1298.0,527.72 1448.7,548.97 1599.5,570.19 1599.6,569.70 1448.8,548.55 1298.0,527.42 1147.2,506.26 996.5,485.05 845.7,463.84 694.9,442.62 544.2,421.41"/><polygon points="547.5,421.02 697.8,441.95 848.1,462.88 998.4,483.80 1148.7,504.74 1299.0,525.71 1449.3,546.73 1599.6,567.72 1599.7,567.22 1449.4,546.31 1299.1,525.42 1148.8,504.49 998.5,483.52 848.2,462.54 697.9,441.56 547.6,420.59"/><polygon points="550.9,420.20 700.7,440.90 850.6,461.60 1000.4,482.29 1150.3,502.99 1300.1,523.74 1449.9,544.52 1599.8,565.28 1599.8,564.79 1450.0,544.11 1300.2,523.45 1150.3,502.75 1000.5,482.02 850.6,461.27 700.8,440.52 551.0,419.78"/><polygon points="554.3,419.39 703.6,439.87 853.0,460.33 1002.4,480.80 1151.8,501.27 1301.2,521.79 1450.5,542.35 1599.9,562.89 1600.0,562.39 1450.6,541.94 1301.2,521.51 1151.8,501.04 1002.4,480.53 853.1,460.01 703.7,439.48 554.3,418.97"/><polygon points="557.6,418.59 706.4,438.83 855.2,459.06 1004.1,479.29 1152.9,499.53 1301.8,519.81 1450.6,540.13 1599.4,560.44 1599.5,559.94 1450.6,539.73 1301.8,519.54 1153.0,499.30 1004.1,479.03 855.3,458.74 706.5,438.45 557.6,418.17"/><polygon points="560.9,417.80 709.2,437.82 857.6,457.83 1006.0,477.84 1154.4,497.87 1302.8,517.93 1451.2,538.03 1599.5,558.12 1599.6,557.62 1451.2,537.63 1302.8,517.65 1154.4,497.64 1006.1,477.58 857.7,457.51 709.3,437.45 560.9,417.38"/><polygon points="564.1,417.02 712.1,436.82 860.0,456.62 1007.9,476.41 1155.9,496.22 1303.8,516.07 1451.7,535.96 1599.7,555.83 1599.7,555.34 1451.8,535.56 1303.8,515.80 1155.9,496.00 1008.0,476.16 860.0,456.30 712.1,436.45 564.2,416.60"/><polygon points="567.3,416.24 714.8,435.83 862.3,455.42 1009.8,475.00 1157.3,494.60 1304.8,514.24 1452.3,533.91 1599.8,553.58 1599.9,553.08 1452.4,533.52 1304.9,513.97 1157.4,494.38 1009.9,474.75 862.4,455.11 714.9,435.46 567.4,415.83"/><polygon points="570.5,415.47 717.6,434.85 864.6,454.23 1011.7,473.61 1158.8,493.00 1305.8,512.43 1452.9,531.90 1599.9,551.36 1600.0,550.87 1452.9,531.52 1305.9,512.17 1158.8,492.78 1011.7,473.36 864.7,453.93 717.6,434.49 570.6,415.06"/><polygon points="576.8,413.95 722.9,432.92 869.0,451.89 1015.1,470.85 1161.3,489.83 1307.4,508.85 1453.5,527.90 1599.6,546.95 1599.6,546.45 1453.5,527.52 1307.4,508.59 1161.3,489.62 1015.2,470.61 869.1,451.59 723.0,432.57 576.9,413.55"/><polygon points="579.9,413.20 725.6,431.98 871.3,450.75 1017.0,469.51 1162.7,488.30 1308.3,507.12 1454.0,525.97 1599.7,544.83 1599.8,544.33 1454.1,525.60 1308.4,506.86 1162.7,488.09 1017.0,469.28 871.3,450.45 725.6,431.63 579.9,412.81"/><polygon points="583.0,412.46 728.2,431.05 873.5,449.62 1018.8,468.20 1164.0,486.79 1309.3,505.41 1454.6,524.08 1599.8,542.74 1599.9,542.25 1454.6,523.71 1309.3,505.16 1164.1,486.58 1018.8,467.96 873.5,449.33 728.3,430.70 583.0,412.07"/><polygon points="586.0,411.73 730.8,430.12 875.7,448.51 1020.6,466.90 1165.4,485.30 1310.3,503.73 1455.1,522.21 1599.9,540.69 1600.0,540.19 1455.1,521.84 1310.3,503.48 1165.4,485.09 1020.6,466.66 875.7,448.22 730.9,429.78 586.0,411.34"/><polygon points="589.0,411.00 733.4,429.20 877.7,447.39 1022.1,465.58 1166.4,483.78 1310.8,502.02 1455.1,520.30 1599.5,538.58 1599.5,538.09 1455.2,519.94 1310.8,501.78 1166.5,483.58 1022.1,465.35 877.8,447.11 733.4,428.86 589.1,410.62"/><polygon points="592.0,410.28 735.9,428.30 879.9,446.31 1023.8,464.31 1167.8,482.33 1311.7,500.39 1455.7,518.48 1599.6,536.59 1599.7,536.09 1455.7,518.12 1311.8,500.15 1167.8,482.14 1023.9,464.09 879.9,446.02 736.0,427.96 592.0,409.91"/><polygon points="594.9,409.57 738.5,427.41 882.0,445.23 1025.6,463.06 1169.1,480.90 1312.6,498.78 1456.2,516.69 1599.7,534.62 1599.8,534.12 1456.2,516.34 1312.7,498.54 1169.1,480.71 1025.6,462.84 882.1,444.96 738.5,427.07 595.0,409.20"/><polygon points="597.9,408.87 741.0,426.52 884.1,444.17 1027.3,461.83 1170.4,479.49 1313.6,497.19 1456.7,514.93 1599.8,532.68 1599.9,532.18 1456.7,514.57 1313.6,496.95 1170.5,479.30 1027.3,461.61 884.2,443.90 741.0,426.20 597.9,408.50"/><polygon points="600.7,408.17 743.5,425.65 886.2,443.13 1029.0,460.61 1171.7,478.10 1314.5,495.62 1457.2,513.19 1600.0,530.76 1600.0,530.27 1457.3,512.84 1314.5,495.39 1171.8,477.91 1029.0,460.39 886.3,442.86 743.5,425.33 600.8,407.80"/><polygon points="606.5,406.79 748.3,423.92 890.2,441.05 1032.1,458.18 1174.0,475.32 1315.9,492.50 1457.8,509.71 1599.6,526.95 1599.7,526.45 1457.8,509.37 1315.9,492.27 1174.0,475.14 1032.1,457.97 890.3,440.79 748.4,423.61 606.5,406.43"/><polygon points="609.3,406.11 750.8,423.08 892.3,440.04 1033.8,457.01 1175.3,473.98 1316.8,491.00 1458.3,508.04 1599.7,525.11 1599.8,524.62 1458.3,507.71 1316.8,490.77 1175.3,473.80 1033.8,456.80 892.3,439.78 750.8,422.76 609.3,405.75"/><polygon points="612.1,405.44 753.2,422.24 894.3,439.04 1035.4,455.85 1176.5,472.66 1317.6,489.51 1458.8,506.40 1599.9,523.30 1599.9,522.82 1458.8,506.06 1317.7,489.29 1176.6,472.48 1035.4,455.64 894.3,438.79 753.2,421.93 612.1,405.08"/><polygon points="614.8,404.77 755.6,421.42 896.3,438.06 1037.0,454.70 1177.8,471.36 1318.5,488.05 1459.2,504.77 1600.0,521.51 1600.0,521.03 1459.3,504.44 1318.5,487.82 1177.8,471.18 1037.1,454.50 896.3,437.80 755.6,421.11 614.9,404.42"/><polygon points="617.6,404.11 757.8,420.59 898.1,437.06 1038.4,453.54 1178.7,470.03 1319.0,486.55 1459.3,503.11 1599.5,519.68 1599.6,519.21 1459.3,502.78 1319.0,486.33 1178.7,469.85 1038.4,453.34 898.2,436.81 757.9,420.28 617.6,403.76"/><polygon points="620.3,403.45 760.2,419.78 900.1,436.10 1040.0,452.42 1179.9,468.76 1319.8,485.13 1459.7,501.53 1599.7,517.95 1599.7,517.48 1459.8,501.20 1319.9,484.91 1180.0,468.58 1040.0,452.22 900.1,435.85 760.2,419.48 620.3,403.11"/><polygon points="623.0,402.80 762.5,418.98 902.1,435.15 1041.6,451.31 1181.1,467.50 1320.7,483.72 1460.2,499.96 1599.8,516.23 1599.8,515.76 1460.3,499.64 1320.7,483.50 1181.2,467.33 1041.6,451.12 902.1,434.90 762.5,418.68 623.0,402.46"/><polygon points="625.6,402.16 764.8,418.18 904.0,434.20 1043.2,450.22 1182.4,466.26 1321.5,482.32 1460.7,498.42 1599.9,514.54 1599.9,514.08 1460.7,498.10 1321.6,482.11 1182.4,466.09 1043.2,450.03 904.0,433.96 764.8,417.89 625.7,401.82"/><polygon points="628.3,401.52 767.0,417.39 905.8,433.25 1044.5,449.12 1183.2,464.99 1322.0,480.91 1460.7,496.85 1599.5,512.81 1599.5,512.35 1460.8,496.53 1322.0,480.69 1183.3,464.83 1044.5,448.93 905.8,433.01 767.0,417.10 628.3,401.19"/><polygon points="633.5,400.26 771.5,415.84 909.5,431.42 1047.6,446.99 1185.6,462.59 1323.6,478.21 1461.7,493.86 1599.7,509.53 1599.7,509.08 1461.7,493.55 1323.7,478.00 1185.6,462.42 1047.6,446.81 909.6,431.18 771.5,415.56 633.5,399.93"/><polygon points="636.0,399.64 773.7,415.08 911.4,430.52 1049.1,445.95 1186.8,461.40 1324.4,476.89 1462.1,492.40 1599.8,507.93 1599.8,507.48 1462.2,492.09 1324.5,476.68 1186.8,461.24 1049.1,445.77 911.4,430.28 773.8,414.80 636.1,399.32"/><polygon points="638.6,399.03 775.9,414.33 913.3,429.63 1050.6,444.92 1187.9,460.23 1325.2,475.58 1462.6,490.95 1599.9,506.34 1599.9,505.90 1462.6,490.64 1325.3,475.37 1187.9,460.07 1050.6,444.74 913.3,429.39 776.0,414.05 638.6,398.70"/><polygon points="641.1,398.42 778.0,413.57 914.9,428.73 1051.9,443.88 1188.8,459.05 1325.7,474.25 1462.6,489.48 1599.5,504.72 1599.5,504.28 1462.6,489.17 1325.7,474.04 1188.8,458.89 1051.9,443.70 915.0,428.50 778.1,413.29 641.2,398.10"/><polygon points="643.6,397.81 780.2,412.84 916.8,427.85 1053.3,442.87 1189.9,457.91 1326.5,472.97 1463.0,488.07 1599.6,503.18 1599.6,502.74 1463.1,487.76 1326.5,472.77 1189.9,457.75 1053.4,442.70 916.8,427.63 780.2,412.56 643.7,397.49"/><polygon points="646.1,397.21 782.3,412.10 918.6,426.99 1054.8,441.88 1191.0,456.78 1327.3,471.71 1463.5,486.67 1599.7,501.65 1599.7,501.22 1463.5,486.37 1327.3,471.51 1191.0,456.62 1054.8,441.70 918.6,426.77 782.4,411.83 646.1,396.90"/><polygon points="648.6,396.62 784.5,411.38 920.4,426.14 1056.3,440.89 1192.1,455.67 1328.0,470.47 1463.9,485.30 1599.8,500.15 1599.9,499.72 1464.0,485.00 1328.1,470.27 1192.2,455.51 1056.3,440.72 920.4,425.91 784.5,411.11 648.6,396.31"/><polygon points="651.0,396.03 786.6,410.66 922.1,425.29 1057.7,439.92 1193.2,454.57 1328.8,469.24 1464.4,483.94 1599.9,498.66 1600.0,498.23 1464.4,483.64 1328.8,469.04 1193.3,454.41 1057.7,439.75 922.2,425.07 786.6,410.39 651.0,395.72"/><polygon points="653.4,395.45 788.6,409.95 923.7,424.44 1058.9,438.93 1194.1,453.45 1329.2,467.98 1464.4,482.55 1599.5,497.14 1599.6,496.71 1464.4,482.26 1329.2,467.79 1194.1,453.29 1058.9,438.77 923.8,424.22 788.6,409.68 653.5,395.14"/><polygon points="658.2,394.29 792.7,408.55 927.2,422.79 1061.7,437.04 1196.2,451.31 1330.7,465.60 1465.2,479.92 1599.7,494.25 1599.8,493.84 1465.3,479.63 1330.7,465.41 1196.2,451.15 1061.7,436.88 927.2,422.58 792.7,408.28 658.2,393.99"/><polygon points="660.6,393.72 794.7,407.86 928.9,421.98 1063.1,436.11 1197.3,450.26 1331.5,464.42 1465.6,478.62 1599.8,492.84 1599.9,492.42 1465.7,478.34 1331.5,464.23 1197.3,450.10 1063.1,435.95 928.9,421.77 794.8,407.60 660.6,393.42"/><polygon points="662.9,393.16 796.8,407.17 930.6,421.18 1064.5,435.19 1198.4,449.22 1332.2,463.26 1466.1,477.34 1599.9,491.44 1600.0,491.03 1466.1,477.06 1332.2,463.08 1198.4,449.06 1064.5,435.03 930.6,420.97 796.8,406.91 662.9,392.86"/><polygon points="665.2,392.60 798.7,406.49 932.2,420.37 1065.6,434.25 1199.1,448.16 1332.6,462.08 1466.1,476.04 1599.5,490.01 1599.6,489.60 1466.1,475.76 1332.6,461.90 1199.1,448.00 1065.7,434.10 932.2,420.16 798.7,406.23 665.2,392.31"/><polygon points="667.5,392.05 800.7,405.82 933.8,419.58 1067.0,433.35 1200.2,447.15 1333.3,460.95 1466.5,474.79 1599.6,488.64 1599.7,488.24 1466.5,474.51 1333.3,460.77 1200.2,446.99 1067.0,433.19 933.9,419.38 800.7,405.56 667.5,391.75"/><polygon points="669.8,391.50 802.6,405.15 935.5,418.81 1068.4,432.46 1201.2,446.14 1334.1,459.83 1466.9,473.55 1599.7,487.29 1599.8,486.89 1466.9,473.28 1334.1,459.65 1201.2,445.98 1068.4,432.30 935.5,418.61 802.7,404.90 669.8,391.21"/><polygon points="672.1,390.95 804.6,404.49 937.1,418.04 1069.7,431.58 1202.2,445.15 1334.8,458.72 1467.3,472.33 1599.8,485.96 1599.9,485.56 1467.3,472.06 1334.8,458.54 1202.2,444.99 1069.7,431.42 937.2,417.84 804.6,404.25 672.1,390.66"/><polygon points="674.3,390.41 806.5,403.84 938.8,417.27 1071.0,430.71 1203.2,444.16 1335.5,457.63 1467.7,471.13 1599.9,484.64 1600.0,484.25 1467.7,470.86 1335.5,457.45 1203.3,444.00 1071.0,430.55 938.8,417.08 806.6,403.60 674.3,390.12"/><polygon points="676.5,389.87 808.4,403.19 940.3,416.50 1072.1,429.82 1204.0,443.16 1335.8,456.51 1467.7,469.90 1599.6,483.29 1599.6,482.90 1467.7,469.62 1335.9,456.33 1204.0,443.00 1072.1,429.67 940.3,416.31 808.4,402.95 676.5,389.59"/><polygon points="680.9,388.81 812.2,401.92 943.4,415.02 1074.7,428.12 1206.0,441.25 1337.2,454.38 1468.5,467.55 1599.8,480.74 1599.8,480.35 1468.5,467.28 1337.3,454.21 1206.0,441.09 1074.7,427.97 943.5,414.83 812.2,401.68 680.9,388.53"/><polygon points="683.1,388.29 814.1,401.29 945.0,414.28 1076.0,427.29 1207.0,440.31 1337.9,453.34 1468.9,466.40 1599.9,479.48 1599.9,479.10 1468.9,466.13 1337.9,453.16 1207.0,440.15 1076.0,427.13 945.0,414.09 814.1,401.05 683.1,388.01"/><polygon points="685.2,387.77 815.9,400.66 946.6,413.56 1077.3,426.46 1207.9,439.38 1338.6,452.30 1469.3,465.26 1600.0,478.24 1600.0,477.86 1469.3,465.00 1338.6,452.13 1208.0,439.22 1077.3,426.30 946.6,413.37 815.9,400.43 685.3,387.49"/><polygon points="687.4,387.25 817.7,400.04 948.0,412.83 1078.3,425.62 1208.6,438.43 1339.0,451.24 1469.3,464.10 1599.6,476.96 1599.6,476.58 1469.3,463.83 1339.0,451.07 1208.7,438.27 1078.3,425.46 948.0,412.64 817.7,399.81 687.4,386.98"/><polygon points="689.5,386.74 819.5,399.43 949.5,412.11 1079.6,424.81 1209.6,437.52 1339.6,450.23 1469.7,462.98 1599.7,475.75 1599.7,475.37 1469.7,462.72 1339.7,450.06 1209.6,437.36 1079.6,424.65 949.6,411.93 819.5,399.20 689.5,386.47"/><polygon points="691.6,386.23 821.3,398.82 951.1,411.41 1080.8,424.01 1210.6,436.61 1340.3,449.23 1470.0,461.88 1599.8,474.55 1599.8,474.17 1470.1,461.62 1340.3,449.06 1210.6,436.45 1080.8,423.85 951.1,411.23 821.4,398.60 691.6,385.97"/><polygon points="693.7,385.73 823.1,398.22 952.6,410.71 1082.0,423.21 1211.5,435.72 1341.0,448.24 1470.4,460.79 1599.9,473.36 1599.9,472.99 1470.4,460.53 1341.0,448.07 1211.5,435.56 1082.1,423.05 952.6,410.53 823.2,398.00 693.7,385.47"/><polygon points="695.7,385.23 824.9,397.63 954.1,410.02 1083.3,422.42 1212.4,434.84 1341.6,447.25 1470.8,459.71 1600.0,472.18 1600.0,471.82 1470.8,459.46 1341.6,447.09 1212.5,434.68 1083.3,422.26 954.1,409.84 824.9,397.40 695.8,384.97"/><polygon points="697.8,384.74 826.6,397.03 955.5,409.32 1084.3,421.63 1213.1,433.94 1342.0,446.25 1470.8,458.61 1599.6,470.98 1599.6,470.61 1470.8,458.36 1342.0,446.09 1213.1,433.78 1084.3,421.47 955.5,409.14 826.6,396.81 697.8,384.48"/><polygon points="701.8,383.76 830.1,395.87 958.4,407.97 1086.7,420.09 1215.0,432.21 1343.2,444.34 1471.5,456.51 1599.8,468.69 1599.8,468.33 1471.5,456.26 1343.3,444.18 1215.0,432.06 1086.7,419.93 958.4,407.80 830.1,395.65 701.9,383.50"/><polygon points="703.8,383.28 831.9,395.29 959.9,407.30 1087.9,419.33 1215.9,431.37 1343.9,443.40 1471.9,455.48 1599.9,467.57 1599.9,467.21 1471.9,455.23 1343.9,443.24 1215.9,431.21 1087.9,419.17 959.9,407.13 831.9,395.07 703.9,383.02"/><polygon points="705.8,382.80 833.6,394.72 961.3,406.64 1089.0,418.58 1216.8,430.53 1344.5,442.47 1472.2,454.46 1600.0,466.46 1600.0,466.10 1472.3,454.21 1344.5,442.31 1216.8,430.37 1089.1,418.42 961.3,406.47 833.6,394.51 705.9,382.54"/><polygon points="707.8,382.32 835.2,394.15 962.6,405.98 1090.0,417.82 1217.4,429.67 1344.8,441.52 1472.2,453.41 1599.6,465.32 1599.7,464.96 1472.3,453.17 1344.8,441.36 1217.4,429.51 1090.0,417.66 962.6,405.81 835.2,393.94 707.8,382.07"/><polygon points="709.8,381.85 836.9,393.59 964.0,405.33 1091.2,417.09 1218.3,428.85 1345.5,440.61 1472.6,452.41 1599.7,464.23 1599.8,463.88 1472.6,452.17 1345.5,440.45 1218.3,428.69 1091.2,416.93 964.1,405.16 836.9,393.38 709.8,381.60"/><polygon points="711.7,381.38 838.6,393.03 965.5,404.69 1092.3,416.36 1219.2,428.03 1346.1,439.71 1472.9,451.42 1599.8,463.15 1599.8,462.80 1473.0,451.18 1346.1,439.55 1219.2,427.87 1092.3,416.20 965.5,404.52 838.6,392.83 711.7,381.13"/><polygon points="713.6,380.91 840.2,392.48 966.9,404.05 1093.5,415.64 1220.1,427.23 1346.7,438.82 1473.3,450.45 1599.9,462.09 1599.9,461.74 1473.3,450.20 1346.7,438.66 1220.1,427.07 1093.5,415.48 966.9,403.89 840.3,392.28 713.6,380.67"/><polygon points="715.5,380.45 841.8,391.93 968.1,403.41 1094.4,414.91 1220.7,426.41 1347.0,437.90 1473.3,449.44 1599.6,460.99 1599.6,460.65 1473.3,449.20 1347.0,437.75 1220.7,426.25 1094.4,414.75 968.1,403.25 841.8,391.73 715.6,380.21"/><polygon points="717.4,379.99 843.5,391.39 969.5,402.78 1095.5,414.20 1221.6,425.61 1347.6,437.03 1473.6,448.48 1599.7,459.95 1599.7,459.61 1473.6,448.25 1347.6,436.87 1221.6,425.45 1095.5,414.04 969.5,402.62 843.5,391.19 717.5,379.75"/><polygon points="721.2,379.09 846.7,390.32 972.2,401.55 1097.8,412.80 1223.3,424.05 1348.8,435.31 1474.3,446.60 1599.8,457.90 1599.9,457.56 1474.3,446.36 1348.8,435.15 1223.3,423.90 1097.8,412.64 972.2,401.39 846.7,390.12 721.2,378.85"/><polygon points="723.0,378.64 848.3,389.79 973.6,400.94 1098.8,412.11 1224.1,423.29 1349.4,434.46 1474.6,445.67 1599.9,456.89 1599.9,456.55 1474.7,445.43 1349.4,434.30 1224.1,423.13 1098.9,411.96 973.6,400.78 848.3,389.59 723.1,378.40"/><polygon points="724.9,378.20 849.8,389.26 974.8,400.33 1099.8,411.42 1224.7,422.50 1349.7,433.59 1474.6,444.71 1599.6,455.85 1599.6,455.52 1474.7,444.48 1349.7,433.43 1224.7,422.34 1099.8,411.26 974.8,400.17 849.9,389.07 724.9,377.96"/><polygon points="726.7,377.75 851.4,388.74 976.1,399.73 1100.8,410.74 1225.6,421.75 1350.3,432.76 1475.0,443.80 1599.7,454.86 1599.7,454.53 1475.0,443.57 1350.3,432.60 1225.6,421.59 1100.9,410.58 976.1,399.57 851.4,388.55 726.7,377.52"/><polygon points="728.5,377.32 853.0,388.23 977.5,399.14 1101.9,410.07 1226.4,421.00 1350.8,431.93 1475.3,442.90 1599.8,453.88 1599.8,453.55 1475.3,442.67 1350.9,431.77 1226.4,420.84 1101.9,409.91 977.5,398.98 853.0,388.03 728.5,377.09"/><polygon points="730.3,376.88 854.5,387.72 978.8,398.56 1103.0,409.41 1227.2,420.26 1351.4,431.12 1475.6,442.01 1599.8,452.91 1599.9,452.58 1475.6,441.78 1351.4,430.96 1227.2,420.10 1103.0,409.25 978.8,398.40 854.6,387.53 730.3,376.65"/><polygon points="732.1,376.45 856.1,387.21 980.1,397.97 1104.0,408.75 1228.0,419.53 1352.0,430.31 1476.0,441.12 1599.9,451.95 1600.0,451.62 1476.0,440.89 1352.0,430.15 1228.0,419.37 1104.1,408.59 980.1,397.81 856.1,387.02 732.1,376.22"/><polygon points="733.9,376.02 857.6,386.70 981.2,397.39 1104.9,408.09 1228.6,418.78 1352.3,429.48 1475.9,440.21 1599.6,450.96 1599.6,450.64 1476.0,439.99 1352.3,429.32 1228.6,418.62 1104.9,407.93 981.3,397.23 857.6,386.51 733.9,375.80"/><polygon points="735.6,375.60 859.1,386.20 982.5,396.81 1106.0,407.44 1229.4,418.06 1352.8,428.69 1476.3,439.35 1599.7,450.02 1599.7,449.70 1476.3,439.12 1352.8,428.53 1229.4,417.91 1106.0,407.28 982.5,396.66 859.1,386.02 735.7,375.37"/><polygon points="739.1,374.76 862.1,385.22 985.1,395.69 1108.0,406.17 1231.0,416.65 1353.9,427.13 1476.9,437.64 1599.9,448.16 1599.9,447.85 1476.9,437.41 1354.0,426.97 1231.0,416.49 1108.0,406.01 985.1,395.53 862.1,385.03 739.2,374.54"/><polygon points="740.9,374.34 863.6,384.73 986.3,395.13 1109.0,405.54 1231.8,415.95 1354.5,426.35 1477.2,436.79 1599.9,447.25 1600.0,446.93 1477.2,436.57 1354.5,426.19 1231.8,415.79 1109.1,405.38 986.3,394.97 863.6,384.55 740.9,374.12"/><polygon points="742.6,373.93 865.0,384.24 987.4,394.57 1109.9,404.90 1232.3,415.23 1354.8,425.57 1477.2,435.93 1599.6,446.31 1599.7,446.00 1477.2,435.71 1354.8,425.41 1232.3,415.07 1109.9,404.74 987.5,394.41 865.0,384.06 742.6,373.71"/><polygon points="744.3,373.52 866.5,383.76 988.7,394.02 1110.9,404.28 1233.1,414.55 1355.3,424.81 1477.5,435.10 1599.7,445.42 1599.7,445.10 1477.5,434.89 1355.3,424.65 1233.1,414.39 1110.9,404.12 988.7,393.86 866.5,383.58 744.3,373.30"/><polygon points="746.0,373.11 867.9,383.29 989.9,393.47 1111.9,403.67 1233.9,413.87 1355.8,424.06 1477.8,434.28 1599.8,444.53 1599.8,444.22 1477.8,434.07 1355.9,423.90 1233.9,413.71 1111.9,403.51 989.9,393.31 867.9,383.11 746.0,372.90"/><polygon points="747.6,372.71 869.4,382.82 991.1,392.94 1112.9,403.06 1234.6,413.19 1356.4,423.32 1478.1,433.47 1599.9,443.65 1599.9,443.34 1478.1,433.26 1356.4,423.16 1234.6,413.03 1112.9,402.90 991.1,392.78 869.4,382.64 747.6,372.49"/><polygon points="749.3,372.31 870.8,382.35 992.3,392.40 1113.9,402.46 1235.4,412.52 1356.9,422.58 1478.4,432.67 1599.9,442.78 1600.0,442.47 1478.4,432.46 1356.9,422.42 1235.4,412.36 1113.9,402.30 992.3,392.24 870.8,382.17 749.3,372.09"/><polygon points="750.9,371.91 872.2,381.88 993.4,391.86 1114.7,401.85 1235.9,411.84 1357.2,421.83 1478.4,431.85 1599.6,441.88 1599.7,441.58 1478.4,431.63 1357.2,421.67 1235.9,411.68 1114.7,401.69 993.4,391.70 872.2,381.70 751.0,371.70"/><polygon points="752.6,371.51 873.6,381.42 994.6,391.34 1115.6,401.26 1236.7,411.18 1357.7,421.11 1478.7,431.06 1599.7,441.03 1599.7,440.72 1478.7,430.85 1357.7,420.95 1236.7,411.02 1115.7,401.10 994.6,391.18 873.6,381.25 752.6,371.30"/><polygon points="755.8,370.73 876.4,380.51 997.0,390.30 1117.6,400.09 1238.1,409.89 1358.7,419.68 1479.3,429.50 1599.9,439.34 1599.9,439.04 1479.3,429.29 1358.7,419.52 1238.2,409.73 1117.6,399.93 997.0,390.14 876.4,380.34 755.8,370.52"/><polygon points="757.4,370.34 877.8,380.06 998.1,389.78 1118.5,399.52 1238.9,409.25 1359.2,418.98 1479.6,428.74 1600.0,438.51 1600.0,438.21 1479.6,428.53 1359.2,418.82 1238.9,409.09 1118.5,399.36 998.2,389.62 877.8,379.89 757.4,370.14"/><polygon points="759.0,369.96 879.1,379.61 999.2,389.27 1119.3,398.93 1239.4,408.60 1359.5,418.26 1479.6,427.95 1599.7,437.66 1599.7,437.36 1479.6,427.74 1359.5,418.10 1239.4,408.44 1119.3,398.77 999.2,389.11 879.1,379.44 759.0,369.75"/><polygon points="760.6,369.58 880.5,379.16 1000.4,388.76 1120.2,398.36 1240.1,407.97 1360.0,417.57 1479.9,427.20 1599.7,436.84 1599.8,436.55 1479.9,426.99 1360.0,417.41 1240.1,407.81 1120.2,398.20 1000.4,388.60 880.5,378.99 760.6,369.37"/><polygon points="762.2,369.20 881.8,378.72 1001.5,388.26 1121.2,397.80 1240.8,407.34 1360.5,416.89 1480.2,426.45 1599.8,436.04 1599.8,435.74 1480.2,426.24 1360.5,416.73 1240.8,407.18 1121.2,397.64 1001.5,388.10 881.8,378.56 762.2,369.00"/><polygon points="763.7,368.82 883.2,378.28 1002.6,387.76 1122.1,397.24 1241.5,406.73 1361.0,416.21 1480.4,425.71 1599.9,435.24 1599.9,434.94 1480.5,425.51 1361.0,416.05 1241.6,406.57 1122.1,397.08 1002.6,387.60 883.2,378.12 763.7,368.62"/><polygon points="765.3,368.45 884.5,377.85 1003.8,387.27 1123.0,396.69 1242.2,406.11 1361.5,415.53 1480.7,424.98 1600.0,434.44 1600.0,434.15 1480.7,424.77 1361.5,415.37 1242.3,405.95 1123.0,396.53 1003.8,387.11 884.5,377.69 765.3,368.25"/><polygon points="766.8,368.07 885.8,377.42 1004.8,386.77 1123.8,396.13 1242.7,405.49 1361.7,414.85 1480.7,424.23 1599.7,433.63 1599.7,433.34 1480.7,424.02 1361.7,414.69 1242.8,405.33 1123.8,395.97 1004.8,386.61 885.8,377.25 766.8,367.88"/><polygon points="768.3,367.71 887.1,376.99 1005.9,386.29 1124.7,395.59 1243.4,404.89 1362.2,414.19 1481.0,423.51 1599.8,432.85 1599.8,432.56 1481.0,423.30 1362.2,414.03 1243.5,404.73 1124.7,395.43 1005.9,386.13 887.1,376.83 768.4,367.51"/></g><g fill="#c4c1b9"><polygon points="-298.9,625.12 -146.2,588.33 6.5,551.54 159.2,514.76 311.9,477.97 464.6,441.18 617.3,404.39 770.0,367.61 769.8,366.88 617.1,403.67 464.4,440.45 311.7,477.24 159.0,514.03 6.3,550.81 -146.4,587.60 -299.1,624.39"/><polygon points="-298.9,652.49 -142.8,612.06 13.3,571.62 169.4,531.20 325.5,490.77 481.6,450.33 637.7,409.90 793.8,369.47 793.7,368.74 637.5,409.17 481.4,449.60 325.3,490.03 169.2,530.46 13.1,570.90 -143.0,611.33 -299.1,651.76"/><polygon points="-299.0,684.30 -139.3,639.61 20.3,594.93 180.0,550.24 339.6,505.53 499.3,460.81 658.9,416.09 818.6,371.39 818.4,370.67 658.7,415.37 499.1,460.06 339.4,504.74 179.8,549.43 20.1,594.14 -139.5,638.86 -299.2,683.57"/><polygon points="-293.7,720.17 -131.2,670.64 31.4,621.12 194.0,571.60 356.5,522.05 519.1,472.49 681.6,422.92 844.2,373.38 844.0,372.67 681.4,422.20 518.8,471.69 356.3,521.19 193.7,570.72 31.1,620.25 -131.4,669.80 -294.0,719.33"/><polygon points="-161.3,720.48 -13.8,671.21 133.6,621.94 281.0,572.66 428.5,523.37 575.9,474.06 723.3,424.73 870.7,375.45 870.5,374.74 723.1,424.01 575.6,473.22 428.1,522.45 280.7,571.70 133.3,620.97 -14.2,670.24 -161.6,719.52"/><polygon points="-27.6,720.36 104.7,671.41 236.9,622.47 369.2,573.53 501.5,524.55 633.7,475.56 766.0,426.55 898.3,377.59 898.0,376.89 765.7,425.81 633.4,474.69 501.1,523.58 368.8,572.50 236.6,621.44 104.3,670.38 -28.0,719.32"/><polygon points="106.0,720.19 223.2,671.59 340.5,622.99 457.8,574.38 575.1,525.78 692.3,477.13 809.6,428.45 926.9,379.81 926.6,379.12 809.3,427.69 692.0,476.22 574.7,524.77 457.4,573.37 340.1,621.97 222.8,670.57 105.5,719.18"/><polygon points="238.6,720.43 341.2,672.12 443.7,623.81 546.3,575.51 648.9,527.20 751.5,478.86 854.0,430.48 956.6,382.12 956.2,381.44 853.6,429.70 751.0,477.93 648.4,526.20 545.8,574.51 443.3,622.82 340.7,671.12 238.1,719.43"/><polygon points="372.1,720.25 460.0,672.31 547.9,624.37 635.8,576.43 723.8,528.49 811.7,480.55 899.6,432.52 987.4,384.52 987.1,383.86 899.1,431.73 811.2,479.59 723.2,527.53 635.3,575.47 547.4,623.41 459.5,671.35 371.6,719.29"/><polygon points="505.5,720.08 579.0,672.52 652.4,624.95 725.9,577.39 799.3,529.83 872.8,482.27 946.2,434.64 1019.6,387.00 1019.2,386.37 945.7,433.86 872.2,481.35 798.7,528.91 725.3,576.47 651.8,624.03 578.4,671.59 504.9,719.15"/><polygon points="638.4,720.29 697.6,673.07 756.9,625.84 816.1,578.62 875.4,531.39 934.6,484.17 993.8,436.90 1053.0,389.59 1052.5,389.00 993.2,436.13 933.9,483.31 874.7,530.53 815.4,577.76 756.2,624.98 696.9,672.21 637.7,719.43"/><polygon points="771.7,720.08 816.9,673.27 862.1,626.46 907.3,579.64 952.5,532.83 997.6,486.02 1042.8,439.18 1087.9,392.28 1087.3,391.74 1042.1,438.47 996.8,485.25 951.7,532.07 906.5,578.88 861.3,625.69 816.1,672.51 770.9,719.32"/><polygon points="904.8,720.26 936.1,673.81 967.5,627.37 998.9,580.92 1030.3,534.48 1061.6,488.03 1093.0,441.58 1124.3,395.06 1123.6,394.61 1092.1,440.98 1060.7,487.42 1029.3,533.86 998.0,580.31 966.6,626.75 935.2,673.20 903.8,719.64"/><polygon points="1038.1,719.99 1055.8,673.99 1073.6,627.99 1091.3,581.99 1109.1,535.99 1126.8,489.99 1144.6,443.99 1162.2,397.94 1161.4,397.64 1143.6,443.59 1125.8,489.59 1108.1,535.59 1090.3,581.59 1072.6,627.59 1054.8,673.59 1037.1,719.59"/><polygon points="1171.3,719.69 1175.7,674.15 1180.1,628.61 1184.4,583.08 1188.8,537.54 1193.2,492.01 1197.6,446.47 1201.9,400.92 1201.0,400.84 1196.5,446.36 1192.1,491.90 1187.7,537.44 1183.3,582.97 1179.0,628.51 1174.6,674.05 1170.2,719.58"/><polygon points="1304.4,719.77 1295.7,674.66 1287.0,629.55 1278.3,584.44 1269.6,539.33 1260.8,494.22 1252.1,449.11 1243.3,404.02 1242.4,404.20 1251.0,449.32 1259.8,494.43 1268.5,539.54 1277.2,584.65 1285.9,629.76 1294.6,674.87 1303.4,719.98"/><polygon points="1437.5,719.48 1416.0,674.88 1394.4,630.27 1372.9,585.67 1351.3,541.06 1329.8,496.46 1308.3,451.85 1286.7,407.28 1285.8,407.70 1307.3,452.33 1328.8,496.94 1350.3,541.54 1371.9,586.15 1393.4,630.75 1415.0,675.36 1436.5,719.96"/><polygon points="1570.8,719.63 1536.7,675.50 1502.6,631.36 1468.5,587.23 1434.4,543.10 1400.3,498.96 1366.2,454.83 1332.1,410.72 1331.3,411.34 1365.3,455.50 1399.4,499.64 1433.5,543.77 1467.6,587.90 1501.7,632.04 1535.8,676.17 1569.9,720.30"/><polygon points="1600.4,622.08 1568.8,592.41 1537.3,562.73 1505.8,533.05 1474.3,503.38 1442.8,473.70 1411.3,444.02 1379.7,414.36 1379.0,415.14 1410.5,444.83 1442.0,474.50 1473.5,504.18 1505.1,533.85 1536.6,563.53 1568.1,593.21 1599.6,622.88"/><polygon points="1600.1,544.24 1575.8,526.23 1551.5,508.23 1527.1,490.23 1502.8,472.22 1478.4,454.22 1454.1,436.21 1429.8,418.21 1429.1,419.10 1453.5,437.10 1477.8,455.10 1502.1,473.11 1526.5,491.11 1550.8,509.11 1575.1,527.12 1599.5,545.12"/><polygon points="1600.1,494.01 1583.3,483.76 1566.5,473.52 1549.7,463.27 1532.9,453.03 1516.1,442.78 1499.2,432.54 1482.4,422.29 1481.8,423.23 1498.7,433.48 1515.5,443.72 1532.3,453.97 1549.1,464.21 1565.9,474.46 1582.7,484.70 1599.6,494.95"/><polygon points="1600.1,458.84 1591.2,454.23 1582.3,449.63 1573.4,445.02 1564.6,440.42 1555.7,435.81 1546.8,431.20 1537.9,426.60 1537.4,427.57 1546.3,432.18 1555.2,436.79 1564.0,441.39 1572.9,446.00 1581.8,450.60 1590.7,455.21 1599.6,459.82"/><polygon points="1600.1,432.84 1599.6,432.60 1599.1,432.36 1598.5,432.11 1598.0,431.87 1597.4,431.63 1596.9,431.39 1596.4,431.14 1595.9,432.15 1596.4,432.39 1597.0,432.63 1597.5,432.87 1598.1,433.12 1598.6,433.36 1599.1,433.60 1599.7,433.84"/><polygon points="-300.4,691.58 -297.5,695.66 -294.6,699.74 -291.7,703.83 -288.8,707.91 -285.9,711.99 -283.0,716.08 -280.1,720.16 -279.2,719.52 -282.1,715.44 -285.0,711.36 -287.9,707.27 -290.8,703.19 -293.7,699.11 -296.6,695.03 -299.5,690.94"/><polygon points="-175.4,595.33 -152.4,613.18 -129.4,631.03 -106.5,648.87 -83.5,666.72 -60.6,684.57 -37.6,702.41 -14.6,720.26 -13.9,719.39 -36.9,701.55 -59.9,683.70 -82.8,665.85 -105.8,648.00 -128.8,630.16 -151.7,612.31 -174.7,594.46"/><polygon points="-41.9,563.25 -0.1,585.68 41.7,608.12 83.5,630.55 125.4,652.99 167.2,675.43 209.0,697.86 250.8,720.30 251.3,719.33 209.5,696.89 167.7,674.46 125.9,652.02 84.1,629.59 42.2,607.15 0.4,584.71 -41.4,562.28"/><polygon points="68.2,536.76 132.2,562.98 196.2,589.20 260.2,615.43 324.2,641.65 388.2,667.87 452.2,694.09 516.2,720.31 516.6,719.29 452.6,693.07 388.6,666.85 324.6,640.63 260.6,614.41 196.6,588.19 132.6,561.97 68.6,535.74"/><polygon points="160.5,514.54 249.3,543.96 338.1,573.39 426.9,602.81 515.7,632.24 604.6,661.66 693.4,691.09 782.2,720.51 782.5,719.47 693.7,690.04 604.9,660.62 516.1,631.19 427.3,601.77 338.5,572.34 249.7,542.92 160.8,513.49"/><polygon points="239.1,495.62 354.6,527.74 470.1,559.87 585.6,592.00 701.1,624.13 816.6,656.25 932.1,688.38 1047.6,720.51 1047.9,719.45 932.4,687.32 816.9,655.19 701.4,623.07 585.9,590.94 470.4,558.81 354.9,526.68 239.4,494.56"/><polygon points="306.8,479.32 450.5,513.78 594.3,548.23 738.0,582.68 881.8,617.14 1025.6,651.59 1169.3,686.04 1313.1,720.50 1313.3,719.43 1169.6,684.97 1025.8,650.52 882.1,616.07 738.3,581.61 594.5,547.16 450.8,512.71 307.0,478.25"/><polygon points="365.7,465.14 538.9,501.62 712.2,538.09 885.5,574.52 1058.7,610.97 1232.0,647.50 1405.2,684.01 1578.5,720.49 1578.7,719.41 1405.5,682.93 1232.2,646.49 1058.9,610.06 885.7,573.56 712.4,537.02 539.1,500.54 365.9,464.06"/><polygon points="417.4,452.67 586.3,484.36 755.3,516.02 924.2,547.67 1093.1,579.36 1262.0,611.12 1430.9,642.95 1599.9,674.67 1600.1,673.58 1431.1,641.87 1262.2,610.28 1093.3,578.62 924.3,546.88 755.4,515.11 586.5,483.35 417.6,451.61"/><polygon points="463.2,441.59 625.6,469.06 788.0,496.51 950.4,524.00 1112.8,551.50 1275.2,579.01 1437.5,606.63 1599.9,634.19 1600.1,633.11 1437.7,605.66 1275.3,578.27 1112.9,550.76 950.5,523.26 788.1,495.73 625.7,468.18 463.3,440.64"/><polygon points="504.0,431.70 660.5,455.81 816.9,479.93 973.4,504.08 1129.9,528.22 1286.3,552.36 1442.8,576.55 1599.2,600.81 1599.4,599.73 1442.9,575.71 1286.4,551.62 1130.0,527.48 973.5,503.33 817.1,479.19 660.6,455.03 504.1,430.85"/><polygon points="540.6,422.84 691.9,444.26 843.1,465.69 994.4,487.12 1145.6,508.55 1296.9,529.97 1448.1,551.40 1599.3,572.99 1599.5,571.93 1448.2,550.66 1297.0,529.23 1145.7,507.80 994.5,486.37 843.2,464.95 692.0,443.52 540.7,422.08"/><polygon points="573.7,414.88 720.2,434.07 866.7,453.26 1013.3,472.45 1159.8,491.65 1306.3,510.84 1452.9,530.03 1599.4,549.32 1599.5,548.38 1453.0,529.29 1306.4,510.09 1159.9,490.90 1013.4,471.71 866.8,452.52 720.3,433.33 573.7,414.13"/><polygon points="603.6,407.67 745.9,424.99 888.1,442.31 1030.4,459.64 1172.7,476.96 1314.9,494.28 1457.2,511.61 1599.5,528.99 1599.6,528.13 1457.3,510.86 1315.0,493.54 1172.8,476.22 1030.5,458.89 888.2,441.57 746.0,424.24 603.7,406.92"/><polygon points="630.9,401.10 769.2,416.84 907.6,432.58 1046.0,448.33 1184.4,464.07 1322.8,479.82 1461.2,495.56 1599.5,511.33 1599.6,510.54 1461.2,494.82 1322.9,479.07 1184.5,463.33 1046.1,447.58 907.7,431.84 769.3,416.10 630.9,400.35"/><polygon points="655.8,395.09 790.6,409.48 925.5,423.88 1060.3,438.27 1195.1,452.67 1329.9,467.06 1464.8,481.45 1599.6,495.85 1599.7,495.10 1464.9,480.71 1330.0,466.31 1195.2,451.92 1060.4,437.53 925.5,423.13 790.7,408.74 655.9,394.34"/><polygon points="678.7,389.57 810.3,402.80 941.8,416.03 1073.4,429.26 1205.0,442.49 1336.5,455.73 1468.1,468.96 1599.6,482.19 1599.7,481.44 1468.2,468.21 1336.6,454.98 1205.0,441.75 1073.5,428.52 941.9,415.29 810.3,402.06 678.8,388.83"/><polygon points="699.8,384.49 828.4,396.71 956.9,408.93 1085.5,421.15 1214.0,433.37 1342.6,445.58 1471.1,457.80 1599.7,470.02 1599.8,469.28 1471.2,457.06 1342.6,444.84 1214.1,432.62 1085.5,420.40 957.0,408.18 828.4,395.96 699.9,383.74"/><polygon points="719.3,379.79 845.1,391.13 970.8,402.46 1096.6,413.79 1222.4,425.12 1348.2,436.46 1473.9,447.79 1599.7,459.12 1599.8,458.38 1474.0,447.04 1348.2,435.71 1222.5,424.38 1096.7,413.04 970.9,401.71 845.1,390.38 719.4,379.05"/><polygon points="737.4,375.44 860.6,385.99 983.8,396.54 1107.0,407.09 1230.2,417.65 1353.4,428.20 1476.6,438.75 1599.8,449.30 1599.8,448.55 1476.6,438.00 1353.4,427.45 1230.2,416.90 1107.0,406.35 983.8,395.79 860.6,385.24 737.4,374.69"/><polygon points="754.2,371.39 875.0,381.25 995.8,391.11 1116.6,400.97 1237.4,410.83 1358.2,420.69 1479.0,430.55 1599.8,440.40 1599.8,439.66 1479.0,429.80 1358.2,419.94 1237.4,410.08 1116.6,400.22 995.8,390.36 875.0,380.50 754.2,370.64"/><polygon points="769.8,367.62 888.4,376.86 1007.0,386.10 1125.5,395.34 1244.1,404.58 1362.7,413.82 1481.2,423.07 1599.8,432.31 1599.9,431.56 1481.3,422.32 1362.7,413.08 1244.2,403.84 1125.6,394.59 1007.0,385.35 888.5,376.11 769.9,366.87"/></g><polygon points="557.2,279.2 848.6,281.2 895.8,283.6 1038.2,273.4 1032.0,414.4 894.9,531.6 847.6,524.8 597.6,478.2 565.8,473.0" fill="#776755" /><polygon points="553.2,277.0 835.0,273.1 1039.5,272.4 848.4,281.6 553.2,279.6" fill="#1f2022" /><defs><linearGradient id="rs" x1="0" x2="1"><stop offset="0" stop-color="#2a2a2a"/><stop offset="0.6" stop-color="#7a7a7a"/><stop offset="1" stop-color="#a8a8a8"/></linearGradient></defs><polygon points="770.0,272.2 835.0,271.4 835.0,273.1 770.0,273.6" fill="url(#rs)" /><polygon points="848.4,281.6 1039.5,272.4 1038.2,274.0 895.8,284.2 848.4,283.4" fill="#48494b" /><polygon points="557.2,279.2 589.2,279.4 597.6,478.2 565.8,473.0" fill="#776755" /><line x1="571.00" y1="280.00" x2="579.30" y2="475.50" stroke="#5a4c3f" stroke-width="0.9" /><polygon points="589.0,279.4 848.6,281.4 847.6,332.2 591.6,319.2" fill="#776755" /><line x1="590.00" y1="298.80" x2="848.40" y2="307.00" stroke="#2a2420" stroke-width="1.3" /><polygon points="591.4,319.0 847.6,332.0 847.8,524.8 597.6,478.2" fill="#20262a" /><line x1="589.00" y1="280.00" x2="597.40" y2="477.80" stroke="#5e5043" stroke-width="1.0" /><polygon points="848.4,281.4 895.8,283.6 894.9,531.6 847.6,524.8" fill="#776755" /><line x1="871.90" y1="283.80" x2="871.20" y2="528.20" stroke="#5a4c3f" stroke-width="0.9" /><line x1="848.20" y1="283.40" x2="847.60" y2="525.00" stroke="#4a3f35" stroke-width="0.8" /><polygon points="895.8,283.6 1038.2,273.4 1037.2,287.4 896.8,308.4" fill="#776755" /><polygon points="896.8,308.4 1037.2,287.4 1032.0,414.4 894.9,531.6" fill="#706151" /><line x1="896.80" y1="308.40" x2="1037.20" y2="287.40" stroke="#3a3129" stroke-width="1.0" /><polygon points="570.4,473.4 597.6,477.6 847.6,524.2 894.0,530.9 1031.9,414.0 1031.9,426.4 891.5,553.5 570.4,490.6" fill="#1c1c1c" /><line x1="906.04" y1="307.02" x2="902.62" y2="525.00" stroke="#5c4e41" stroke-width="0.8"/><line x1="916.49" y1="305.45" x2="912.81" y2="516.29" stroke="#5c4e41" stroke-width="0.8"/><line x1="926.26" y1="303.99" x2="922.35" y2="508.13" stroke="#5c4e41" stroke-width="0.8"/><line x1="935.41" y1="302.62" x2="931.31" y2="500.47" stroke="#5c4e41" stroke-width="0.8"/><line x1="944.00" y1="301.34" x2="939.74" y2="493.27" stroke="#5c4e41" stroke-width="0.8"/><line x1="952.07" y1="300.13" x2="947.69" y2="486.48" stroke="#5c4e41" stroke-width="0.8"/><line x1="959.68" y1="298.99" x2="955.18" y2="480.07" stroke="#5c4e41" stroke-width="0.8"/><line x1="966.86" y1="297.92" x2="962.27" y2="474.01" stroke="#5c4e41" stroke-width="0.8"/><line x1="973.65" y1="296.91" x2="968.99" y2="468.27" stroke="#5c4e41" stroke-width="0.8"/><line x1="980.07" y1="295.94" x2="975.35" y2="462.83" stroke="#5c4e41" stroke-width="0.8"/><line x1="986.16" y1="295.03" x2="981.40" y2="457.66" stroke="#5c4e41" stroke-width="0.8"/><line x1="991.95" y1="294.17" x2="987.14" y2="452.75" stroke="#5c4e41" stroke-width="0.8"/><line x1="997.45" y1="293.35" x2="992.62" y2="448.07" stroke="#5c4e41" stroke-width="0.8"/><line x1="1002.68" y1="292.56" x2="997.83" y2="443.61" stroke="#5c4e41" stroke-width="0.8"/><line x1="1007.67" y1="291.82" x2="1002.81" y2="439.36" stroke="#5c4e41" stroke-width="0.8"/><line x1="1012.43" y1="291.11" x2="1007.56" y2="435.29" stroke="#5c4e41" stroke-width="0.8"/><line x1="1016.97" y1="290.43" x2="1012.11" y2="431.41" stroke="#5c4e41" stroke-width="0.8"/><line x1="1021.32" y1="289.78" x2="1016.46" y2="427.69" stroke="#5c4e41" stroke-width="0.8"/><line x1="1025.48" y1="289.15" x2="1020.62" y2="424.12" stroke="#5c4e41" stroke-width="0.8"/><line x1="1029.46" y1="288.56" x2="1024.62" y2="420.71" stroke="#5c4e41" stroke-width="0.8"/><line x1="1033.28" y1="287.99" x2="1028.46" y2="417.43" stroke="#5c4e41" stroke-width="0.8"/><line x1="896.00" y1="283.80" x2="895.10" y2="531.20" stroke="#5a4c3f" stroke-width="1.1" /><polygon points="603.7,327.0 665.2,328.8 668.8,483.2 607.4,472.2" fill="#a3a3a3" /><polygon points="676.4,329.4 748.2,332.6 750.2,495.6 680.6,484.0" fill="#a6a6a6" /><polygon points="760.2,334.2 841.8,337.6 841.8,511.6 760.6,498.8" fill="#bdbdbd" /><defs><clipPath id="g1"><polygon points="603.7,327.0 665.2,328.8 668.8,483.2 607.4,472.2"/></clipPath><clipPath id="g2"><polygon points="676.4,329.4 748.2,332.6 750.2,495.6 680.6,484.0"/></clipPath><clipPath id="g3"><polygon points="760.2,334.2 841.8,337.6 841.8,511.6 760.6,498.8"/></clipPath></defs><g clip-path="url(#g1)"><polygon points="590,478 672,452 672,500 590,500" fill="#5f5f5f"/></g><g clip-path="url(#g2)"><polygon points="670,452 752,423 752,510 670,510" fill="#626262"/></g><g clip-path="url(#g3)"><polygon points="758,421 833,395 845,394 845,520 758,520" fill="#6a6a6a"/><polygon points="832.5,338 845,338 845,394.6 832.5,396" fill="#d3d2ce"/></g><polygon points="600.6,325.4 666.2,327.4 670.2,484.6 606.0,473.4" fill="none" stroke="#fff" stroke-width="2.3" stroke-linejoin="round"/><line x1="822.9" y1="404" x2="822.9" y2="362" stroke="#1e8a1e" stroke-width="1"/><polygon points="820.2,365.5 825.6,365.5 822.9,355.2" fill="#1e8a1e"/><line x1="822.9" y1="404.4" x2="805" y2="411" stroke="#b01515" stroke-width="1"/><polygon points="799.5,413.2 806.5,407.8 807.6,413.0" fill="#b01515"/><line x1="822.9" y1="404.4" x2="858" y2="407.8" stroke="#1a1aa0" stroke-width="1"/><polygon points="857.2,405.0 868.2,408.3 857.0,411.0" fill="#1a1aa0"/></svg><div class="r" style="left:873px;top:68px;width:300px;height:165px;background:#fff;box-shadow:0 1px 2px rgba(0,0,0,0.22)"></div><div class="r" style="left:873px;top:68px;width:300px;height:36px;background:#f9f8f5;border-bottom:1px solid #e6e4df;box-sizing:border-box"></div><div class="r" style="left:888px;top:101px;width:75px;height:3px;background:#3e9466"></div><div class="t" style="left:901.4px;top:75.79px;font-size:11px;color:#3a3a3a;font-weight:normal;">Configure</div><div class="t" style="left:981.6px;top:75.79px;font-size:11px;color:#555;font-weight:normal;">Context</div><div class="t" style="left:1047.3px;top:75.79px;font-size:11px;color:#555;font-weight:normal;">Requirements</div><div class="t" style="left:894.0px;top:115.95px;font-size:14px;color:#333;font-weight:normal;">Opening A</div><div class="t" style="left:894.0px;top:146.72px;font-size:11.5px;color:#444;font-weight:normal;">Type</div><div class="r" style="left:894px;top:168px;width:258px;height:29px;border:1px solid #dedede;box-sizing:border-box;background:#fff"></div><div class="t" style="left:905.0px;top:172.62px;font-size:11.5px;color:#555;font-weight:normal;">Vast raam</div><svg class="r" style="left:1126px;top:179px" width="12" height="8"><polygon points="2.5,2 9.5,2 6,6" fill="#555"/></svg><div class="r" style="left:757px;top:623px;width:49px;height:20px;background:#e2e1de;border-radius:10px"></div><div class="r" style="left:812px;top:621px;width:64px;height:23px;background:#3e9466;border-radius:11.5px"></div><div class="r" style="left:882px;top:623px;width:46px;height:20px;background:#e2e1de;border-radius:10px"></div><div class="t" style="left:765.6px;top:622.39px;font-size:11px;color:#555;font-weight:normal;">Studio</div><div class="t" style="left:823.2px;top:622.59px;font-size:11px;color:#fff;font-weight:normal;-webkit-text-stroke:0.35px #fff;letter-spacing:0.1px">Opening</div><div class="t" style="left:890.5px;top:622.39px;font-size:11px;color:#555;font-weight:normal;">Gevel</div><svg class="r" style="left:510px;top:620px" width="90" height="26"><g fill="none" stroke="#9d9d9d" stroke-width="1.3" stroke-linecap="round" stroke-linejoin="round"><circle cx="16.2" cy="11.3" r="4.6"/><line x1="13" y1="14.6" x2="7.2" y2="19.8"/><line x1="42.3" y1="6.8" x2="42.3" y2="17.6"/><polyline points="40.6,8.8 42.3,6.6 44,8.8"/><line x1="42.3" y1="17.6" x2="49.5" y2="18.8"/><polyline points="47.6,16.9 49.8,18.8 47.4,20.6"/><line x1="42.3" y1="17.6" x2="38.4" y2="20.6"/><polyline points="38.2,18.4 38.2,20.8 40.4,21.2"/><line x1="66.5" y1="13.2" x2="75.6" y2="13.2"/><polyline points="73.2,11.2 75.6,13.2 73.2,15.2"/><line x1="77.6" y1="8.6" x2="77.6" y2="18.2"/></g></svg><div class="r" style="left:0px;top:45px;width:1187px;height:3px;background:linear-gradient(rgba(40,40,35,0.16),rgba(40,40,35,0))"></div>
</body></html>
